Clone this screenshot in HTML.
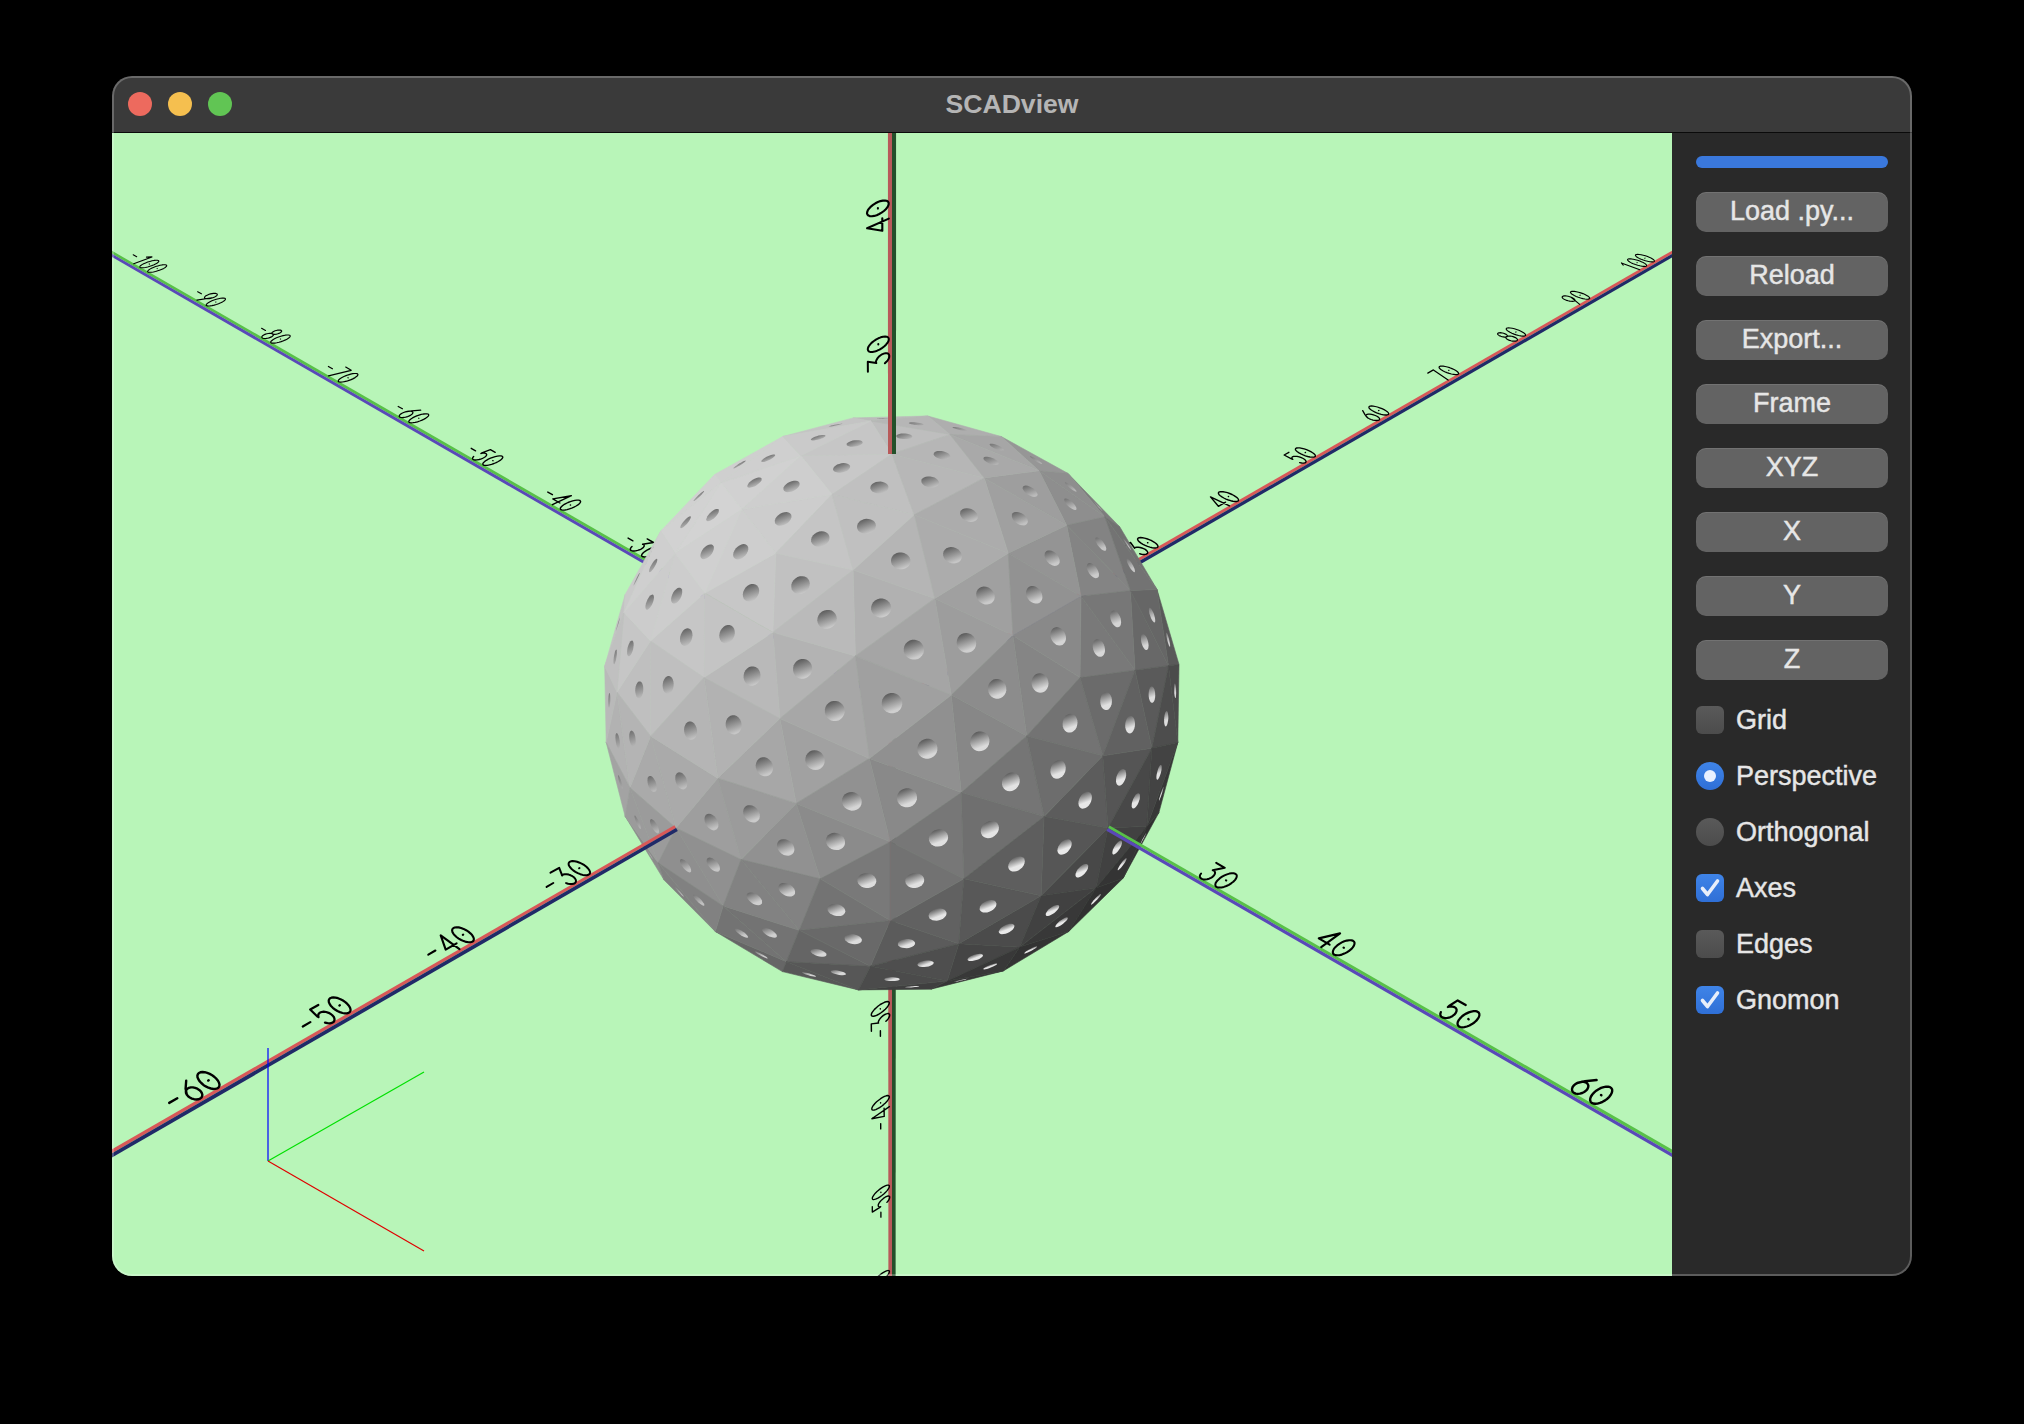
<!DOCTYPE html>
<html><head><meta charset="utf-8"><title>SCADview</title>
<style>
html,body{margin:0;padding:0;background:#000;width:2024px;height:1424px;overflow:hidden;}
body{font-family:"Liberation Sans",sans-serif;position:relative;}
#win{position:absolute;left:112px;top:76px;width:1800px;height:1200px;border-radius:20px;overflow:hidden;background:#292929;}
#title{position:absolute;left:0;top:0;width:1800px;height:56px;background:#3a3a3a;}
#title .sep{position:absolute;left:0;top:56px;width:1800px;height:1px;background:#0a0a0a;}
#title .name{position:absolute;left:0;width:1800px;top:12.5px;text-align:center;font-weight:bold;font-size:26.6px;line-height:30px;color:#b5b5b5;}
.tl{position:absolute;top:16px;width:24px;height:24px;border-radius:50%;}
#view{position:absolute;left:0;top:57px;width:1560px;height:1143px;background:#b8f5b8;overflow:hidden;}
#view svg{position:absolute;left:0;top:0;}
#side{position:absolute;left:1560px;top:57px;width:240px;height:1143px;background:#292929;}
#border{position:absolute;left:0;top:0;width:1800px;height:1200px;border-radius:20px;box-shadow:inset 0 0 0 2px rgba(255,255,255,0.24);pointer-events:none;}
.btn{position:absolute;left:24px;width:192px;height:40px;border-radius:10px;background:#636363;color:#e6e6e6;font-size:27px;line-height:39px;text-align:center;-webkit-text-stroke:0.45px #e6e6e6;box-shadow:inset 0 1px 0 rgba(255,255,255,0.10);}
.bar{position:absolute;left:24px;top:23px;width:192px;height:12px;border-radius:6px;background:#3a78dc;}
.chk{position:absolute;left:24px;width:28px;height:28px;border-radius:6px;background:linear-gradient(#5a5a5a,#4c4c4c);}
.chk.on{background:linear-gradient(#3f84e8,#2f6fd6);}
.chk.on svg{position:absolute;left:0;top:0;}
.rad{position:absolute;left:24px;width:28px;height:28px;border-radius:50%;background:linear-gradient(#5a5a5a,#4c4c4c);}
.rad.on{background:linear-gradient(#3f84e8,#2f6fd6);}
.rad.on::after{content:"";position:absolute;left:8px;top:8px;width:12px;height:12px;border-radius:50%;background:#e8f0ff;}
.lbl{position:absolute;left:64px;font-size:27px;line-height:30px;color:#e6e6e6;-webkit-text-stroke:0.45px #e6e6e6;}
</style></head>
<body>
<div id="win">
  <div id="title">
    <div class="tl" style="left:16px;background:#ed6a5e;"></div>
    <div class="tl" style="left:56px;background:#f5bf4f;"></div>
    <div class="tl" style="left:96px;background:#61c554;"></div>
    <div class="name">SCADview</div>
    <div class="sep"></div>
  </div>
  <div id="view">
    <svg width="1560" height="1143" viewBox="112 133 1560 1143">
<polygon points="893.5,701 89.8,238 88.5,240.3 892,703.5" fill="#58c048"/><polygon points="892,703.5 88.5,240.3 87.1,242.7 890.5,706.2" fill="#5a48b8"/><polygon points="890.5,700.8 1700,234.5 1701.4,237 892,703.5" fill="#d85858"/><polygon points="892,703.5 1701.4,237 1702.9,239.7 893.7,706.5" fill="#202a68"/><polygon points="888.1,703.5 888.4,1305.9 892,1305.9 892,703.5" fill="#b85a5a"/><polygon points="892,703.5 892,1305.9 895.6,1305.9 895.9,703.5" fill="#24502a"/>
<g fill="none" stroke="#000" stroke-linecap="round" stroke-linejoin="round"><path d="M880.4 1036.3 L880.4 1030.7 M871.4 1031.2 L871.3 1023.9 L878.6 1023 L878.2 1023.1 L878.3 1022 L878.7 1020.8 L879.5 1019.4 L880.6 1018 L882 1016.6 L883.4 1015.4 L884.9 1014.5 L886.4 1013.9 L887.6 1013.6 L888.6 1013.6 L889.3 1014.1 L889.7 1014.9 L889.6 1015.9 L889.1 1017.2 L888.3 1018.6 L887.2 1020 L885.9 1021.3 M880.3 1004.5 L878.2 1006 L876.3 1007.7 L874.5 1009.4 L873.1 1011.1 L872 1012.6 L871.4 1014 L871.3 1015.1 L871.7 1015.8 L872.5 1016.2 L873.8 1016.2 L875.4 1015.8 L877.3 1015 L879.3 1013.9 L881.4 1012.5 L883.4 1010.9 L885.3 1009.2 L886.9 1007.5 L888.1 1005.9 L888.9 1004.4 L889.3 1003.2 L889.2 1002.3 L888.6 1001.7 L887.5 1001.5 L886.1 1001.8 L884.4 1002.3 L882.4 1003.3 L880.3 1004.5 M880.3 1009.1 L880.3 1008.7" stroke-width="1.46"/><path d="M880.7 1128.9 L880.7 1123.6 M889.4 1106.6 L871.8 1118.7 L884.2 1116.4 L884.1 1108.2 M880.6 1098.7 L878.6 1100.2 L876.6 1101.8 L874.9 1103.5 L873.5 1105.2 L872.5 1106.7 L871.9 1108 L871.8 1109.1 L872.2 1109.8 L873 1110.1 L874.2 1110 L875.8 1109.6 L877.6 1108.7 L879.6 1107.6 L881.6 1106.2 L883.6 1104.6 L885.4 1102.9 L887 1101.3 L888.2 1099.7 L889 1098.2 L889.4 1097.1 L889.2 1096.2 L888.7 1095.7 L887.6 1095.5 L886.2 1095.8 L884.5 1096.4 L882.6 1097.4 L880.6 1098.7 M880.6 1103 L880.6 1102.6" stroke-width="1.39"/><path d="M880.9 1217.2 L880.9 1212.2 M872.3 1206.6 L872.3 1212.1 L879.5 1207.6 L880.7 1206.7 L879.4 1206.9 L878.5 1206.5 L878.2 1205.8 L878.3 1204.6 L879 1203.1 L880.2 1201.5 L881.7 1199.9 L883.4 1198.4 L885.1 1197.2 L886.8 1196.4 L888.1 1196 L889.2 1196.2 L889.7 1196.8 L889.7 1197.8 L889.2 1199.2 L888.3 1200.8 L886.9 1202.4 M880.9 1188.4 L878.9 1189.9 L877 1191.5 L875.3 1193.2 L874 1194.8 L873 1196.3 L872.4 1197.6 L872.3 1198.6 L872.6 1199.3 L873.4 1199.6 L874.6 1199.4 L876.2 1198.9 L877.9 1198.1 L879.9 1196.9 L881.9 1195.5 L883.8 1193.9 L885.6 1192.2 L887.1 1190.6 L888.3 1189 L889.1 1187.6 L889.4 1186.5 L889.3 1185.6 L888.7 1185.2 L887.7 1185.1 L886.4 1185.4 L884.7 1186.1 L882.8 1187.1 L880.9 1188.4 M880.9 1192.5 L880.9 1192.1" stroke-width="1.33"/><path d="M881.2 1301.5 L881.2 1296.6 M873.1 1291.8 L878.2 1291.8 L882.3 1290.8 L881 1291.4 L879.9 1291.5 L879.1 1291.3 L878.7 1290.7 L878.7 1289.8 L879.1 1288.6 L879.9 1287.3 L881 1285.8 L882.4 1284.4 L883.8 1283.2 L885.3 1282.1 L886.7 1281.4 L888 1281 L888.9 1281.1 L889.5 1281.5 L889.7 1282.2 L889.5 1283.3 L888.9 1284.6 L887.9 1286 L886.7 1287.4 L885.3 1288.8 L883.8 1289.9 L882.3 1290.8 M881.1 1273.9 L879.2 1275.4 L877.3 1277.1 L875.7 1278.8 L874.4 1280.4 L873.4 1281.8 L872.8 1283.1 L872.7 1284 L873.1 1284.7 L873.9 1284.9 L875 1284.7 L876.5 1284.2 L878.3 1283.3 L880.2 1282.1 L882.1 1280.7 L884 1279.1 L885.7 1277.4 L887.2 1275.8 L888.4 1274.2 L889.1 1272.9 L889.5 1271.8 L889.4 1271 L888.8 1270.6 L887.8 1270.5 L886.5 1270.9 L884.9 1271.6 L883.1 1272.6 L881.1 1273.9 M881.1 1277.8 L881.1 1277.5" stroke-width="1.27"/><path d="M881.4 1381.9 L881.4 1377.3 M873.2 1378.9 L873.2 1372.5 L889.6 1364.8 M881.4 1355.6 L879.5 1357.1 L877.7 1358.8 L876.1 1360.4 L874.8 1362 L873.8 1363.5 L873.3 1364.7 L873.2 1365.6 L873.5 1366.2 L874.3 1366.4 L875.4 1366.2 L876.9 1365.6 L878.6 1364.7 L880.4 1363.5 L882.3 1362 L884.2 1360.5 L885.9 1358.8 L887.3 1357.2 L888.5 1355.6 L889.2 1354.3 L889.5 1353.2 L889.4 1352.5 L888.9 1352.1 L887.9 1352.1 L886.6 1352.5 L885 1353.2 L883.3 1354.3 L881.4 1355.6 M881.4 1359.3 L881.4 1359.1" stroke-width="1.21"/><path d="M1124.1 546.1 L1130.5 542.5 L1134.7 548.2 L1134.4 547.9 L1135.4 547.5 L1136.7 547.2 L1138.3 547.2 L1140.1 547.5 L1141.9 548 L1143.6 548.6 L1145.2 549.4 L1146.4 550.4 L1147.3 551.3 L1147.7 552.2 L1147.7 553 L1147.2 553.7 L1146.2 554.2 L1144.9 554.4 L1143.3 554.4 L1141.5 554.2 L1139.7 553.7 M1151.5 540.6 L1149.2 539.6 L1146.8 538.7 L1144.5 538.1 L1142.4 537.7 L1140.5 537.6 L1139.1 537.7 L1138.1 538.1 L1137.6 538.8 L1137.7 539.7 L1138.3 540.8 L1139.4 541.9 L1141 543.1 L1143 544.3 L1145.2 545.4 L1147.5 546.4 L1149.9 547.1 L1152.2 547.7 L1154.2 547.9 L1155.8 547.9 L1157.1 547.6 L1157.8 547 L1158 546.2 L1157.6 545.3 L1156.7 544.1 L1155.4 543 L1153.6 541.8 L1151.5 540.6 M1147.6 542.8 L1147.9 542.7" stroke-width="1.46"/><path d="M1229.5 505.9 L1210.5 496.9 L1218.4 506.3 L1225.6 502.2 M1232 494.5 L1229.7 493.5 L1227.4 492.7 L1225.1 492.1 L1223 491.7 L1221.2 491.6 L1219.8 491.8 L1218.8 492.2 L1218.4 492.8 L1218.5 493.7 L1219.1 494.7 L1220.3 495.8 L1221.9 496.9 L1223.8 498 L1226 499.1 L1228.4 500 L1230.7 500.7 L1232.9 501.2 L1234.9 501.5 L1236.6 501.5 L1237.7 501.2 L1238.4 500.6 L1238.6 499.9 L1238.2 498.9 L1237.3 497.9 L1235.9 496.8 L1234.1 495.6 L1232 494.5 M1228.3 496.6 L1228.6 496.5" stroke-width="1.39"/><path d="M1288.9 452.3 L1284.1 455 L1291.5 458.9 L1292.8 459.4 L1292 458.4 L1291.9 457.5 L1292.4 456.8 L1293.5 456.4 L1295.1 456.3 L1297.1 456.4 L1299.2 456.9 L1301.3 457.6 L1303.2 458.5 L1304.7 459.5 L1305.7 460.6 L1306.1 461.5 L1305.8 462.3 L1304.9 462.8 L1303.5 463.1 L1301.7 463 L1299.6 462.7 M1308.7 450.6 L1306.5 449.6 L1304.2 448.9 L1301.9 448.3 L1299.8 447.9 L1298.1 447.8 L1296.7 448 L1295.8 448.3 L1295.4 449 L1295.5 449.8 L1296.2 450.7 L1297.4 451.8 L1299 452.9 L1300.9 453.9 L1303.1 454.9 L1305.4 455.8 L1307.7 456.5 L1309.9 457 L1311.9 457.2 L1313.5 457.2 L1314.6 456.9 L1315.3 456.4 L1315.4 455.7 L1315 454.8 L1314 453.8 L1312.6 452.7 L1310.8 451.6 L1308.7 450.6 M1305.2 452.6 L1305.5 452.4" stroke-width="1.33"/><path d="M1362.7 410.6 L1365.1 414.9 L1367.9 418 L1366.8 417.1 L1366.1 416.3 L1365.9 415.5 L1366.3 414.8 L1367.1 414.4 L1368.3 414.2 L1369.9 414.2 L1371.7 414.4 L1373.5 414.9 L1375.3 415.5 L1377 416.3 L1378.3 417.1 L1379.2 418 L1379.6 418.8 L1379.6 419.5 L1379 420.1 L1378 420.4 L1376.6 420.5 L1374.9 420.4 L1373 420.1 L1371.2 419.5 L1369.4 418.8 L1367.9 418 M1382 408.7 L1379.7 407.8 L1377.4 407 L1375.2 406.5 L1373.2 406.1 L1371.4 406 L1370.1 406.1 L1369.2 406.5 L1368.9 407.1 L1369 407.9 L1369.7 408.8 L1370.9 409.8 L1372.5 410.8 L1374.5 411.9 L1376.6 412.8 L1378.9 413.6 L1381.2 414.3 L1383.4 414.8 L1385.3 415 L1386.9 415 L1388 414.7 L1388.6 414.2 L1388.7 413.5 L1388.2 412.7 L1387.3 411.7 L1385.9 410.7 L1384.1 409.6 L1382 408.7 M1378.6 410.6 L1378.9 410.4" stroke-width="1.26"/><path d="M1427.8 373.1 L1433.4 369.9 L1448.1 380.1 M1452 368.6 L1449.7 367.7 L1447.4 367 L1445.2 366.5 L1443.2 366.2 L1441.5 366.1 L1440.2 366.2 L1439.4 366.6 L1439.1 367.1 L1439.2 367.9 L1440 368.7 L1441.2 369.7 L1442.8 370.7 L1444.7 371.7 L1446.9 372.6 L1449.2 373.4 L1451.4 374 L1453.6 374.4 L1455.4 374.7 L1457 374.6 L1458 374.4 L1458.6 373.9 L1458.7 373.3 L1458.2 372.5 L1457.2 371.5 L1455.8 370.5 L1454 369.5 L1452 368.6 M1448.7 370.4 L1449 370.3" stroke-width="1.21"/><path d="M1504.7 333.7 L1503.6 333.3 L1502.4 333 L1501.3 332.8 L1500.2 332.7 L1499.3 332.8 L1498.5 332.9 L1498 333.2 L1497.7 333.5 L1497.6 334 L1497.8 334.4 L1498.3 334.9 L1499 335.4 L1499.9 335.9 L1500.9 336.3 L1502 336.7 L1503.2 336.9 L1504.3 337.1 L1505.3 337.1 L1506.2 337 L1506.9 336.8 L1507.3 336.5 L1507.5 336.1 L1507.4 335.6 L1507 335.1 L1506.4 334.6 L1505.6 334.1 L1504.7 333.7 M1514.3 337.1 L1513 336.6 L1511.7 336.3 L1510.3 336.1 L1509.1 336 L1507.9 336.1 L1507 336.3 L1506.3 336.6 L1505.9 337 L1505.8 337.5 L1506 338.1 L1506.5 338.7 L1507.3 339.3 L1508.4 339.9 L1509.6 340.4 L1510.9 340.8 L1512.3 341.1 L1513.6 341.2 L1514.8 341.2 L1515.9 341.1 L1516.7 340.8 L1517.2 340.4 L1517.5 340 L1517.4 339.4 L1517 338.8 L1516.4 338.2 L1515.4 337.6 L1514.3 337.1 M1518.9 330.3 L1516.6 329.5 L1514.4 328.8 L1512.2 328.3 L1510.2 328 L1508.6 327.9 L1507.3 328 L1506.5 328.3 L1506.2 328.9 L1506.4 329.6 L1507.1 330.4 L1508.3 331.3 L1510 332.3 L1511.9 333.2 L1514.1 334.1 L1516.3 334.9 L1518.6 335.5 L1520.7 335.9 L1522.5 336.1 L1524 336.1 L1525 335.8 L1525.6 335.4 L1525.6 334.8 L1525.1 334 L1524.1 333.1 L1522.7 332.2 L1520.9 331.2 L1518.9 330.3 M1515.8 332.1 L1516 331.9" stroke-width="1.16"/><path d="M1571.1 297.2 L1569.7 296.7 L1568.2 296.3 L1566.7 296 L1565.4 295.9 L1564.2 295.9 L1563.2 296.1 L1562.5 296.4 L1562.2 296.8 L1562.2 297.4 L1562.5 298 L1563.2 298.6 L1564.1 299.2 L1565.3 299.8 L1566.7 300.4 L1568.2 300.8 L1569.7 301.1 L1571.1 301.3 L1572.4 301.4 L1573.5 301.3 L1574.3 301 L1574.8 300.7 L1575 300.2 L1574.8 299.6 L1574.3 299 L1573.5 298.4 L1572.4 297.7 L1571.1 297.2 M1571.1 297.2 L1579.7 304.4 M1582.9 293.6 L1580.7 292.9 L1578.5 292.2 L1576.3 291.7 L1574.4 291.4 L1572.7 291.3 L1571.5 291.4 L1570.7 291.8 L1570.4 292.3 L1570.7 292.9 L1571.4 293.7 L1572.6 294.6 L1574.3 295.5 L1576.2 296.4 L1578.3 297.3 L1580.6 298 L1582.8 298.6 L1584.9 299 L1586.7 299.2 L1588.1 299.2 L1589.1 298.9 L1589.7 298.5 L1589.7 297.9 L1589.2 297.2 L1588.2 296.3 L1586.7 295.4 L1585 294.5 L1582.9 293.6 M1580 295.3 L1580.2 295.2" stroke-width="1.11"/><path d="M1623.2 265.3 L1621.4 262.9 L1639.8 269.8 M1639.8 261.1 L1637.6 260.3 L1635.4 259.7 L1633.3 259.2 L1631.4 258.9 L1629.8 258.8 L1628.6 258.9 L1627.8 259.3 L1627.5 259.8 L1627.8 260.4 L1628.6 261.2 L1629.8 262 L1631.4 262.9 L1633.3 263.8 L1635.5 264.6 L1637.7 265.3 L1639.9 265.8 L1641.9 266.2 L1643.7 266.4 L1645.1 266.4 L1646.1 266.2 L1646.6 265.8 L1646.6 265.2 L1646.1 264.5 L1645.1 263.6 L1643.6 262.8 L1641.8 261.9 L1639.8 261.1 M1637 262.7 L1637.2 262.5 M1647.6 256.6 L1645.4 255.8 L1643.2 255.2 L1641.1 254.7 L1639.2 254.5 L1637.6 254.4 L1636.4 254.5 L1635.6 254.8 L1635.4 255.3 L1635.7 255.9 L1636.4 256.7 L1637.6 257.5 L1639.2 258.4 L1641.2 259.3 L1643.3 260.1 L1645.5 260.8 L1647.7 261.3 L1649.7 261.7 L1651.5 261.9 L1652.9 261.9 L1653.9 261.7 L1654.4 261.3 L1654.4 260.7 L1653.9 260 L1652.9 259.2 L1651.4 258.3 L1649.7 257.4 L1647.6 256.6 M1644.8 258.2 L1645 258.1" stroke-width="1.06"/><path d="M628.1 538.1 L632.9 540.8 M647.2 538.9 L653.5 542.5 L642.6 544.3 L643 544.2 L643.8 544.7 L644.2 545.5 L644.1 546.3 L643.5 547.2 L642.5 548.2 L641.1 549.1 L639.5 549.8 L637.7 550.4 L635.9 550.8 L634.2 551 L632.6 550.9 L631.4 550.6 L630.6 550.1 L630.3 549.3 L630.4 548.5 L631 547.6 L632 546.6 M655.6 553.8 L657.7 552.7 L659.5 551.5 L660.9 550.3 L661.7 549.1 L662.1 548.2 L661.9 547.4 L661.1 546.8 L659.9 546.5 L658.2 546.5 L656.2 546.7 L654 547.3 L651.6 548 L649.3 549 L647 550.1 L645.1 551.3 L643.5 552.5 L642.4 553.7 L641.7 554.8 L641.6 555.7 L642.1 556.3 L643.1 556.8 L644.6 556.9 L646.5 556.8 L648.6 556.4 L650.9 555.8 L653.3 554.9 L655.6 553.8 M651.7 551.6 L652 551.8" stroke-width="1.46"/><path d="M547.8 492.1 L552.4 494.7 M552.4 504.7 L571.4 495.7 L552.8 498.9 L559.9 503 M574 507.1 L576.1 506 L577.9 504.9 L579.3 503.7 L580.2 502.6 L580.6 501.7 L580.4 501 L579.7 500.4 L578.5 500.1 L576.9 500.1 L574.9 500.4 L572.7 500.9 L570.3 501.6 L568 502.5 L565.8 503.6 L563.8 504.7 L562.2 505.9 L561.1 507 L560.4 508 L560.3 508.8 L560.7 509.5 L561.7 509.9 L563.1 510.1 L564.9 510 L567.1 509.6 L569.4 508.9 L571.7 508.1 L574 507.1 M570.3 505 L570.6 505.1" stroke-width="1.39"/><path d="M471.2 448.3 L475.6 450.8 M495.2 452.3 L490.4 449.6 L481.9 452.9 L480.8 453.5 L482.8 453.2 L484.6 453.2 L485.9 453.6 L486.6 454.2 L486.7 455 L486.1 456 L485 457 L483.3 458 L481.4 458.9 L479.2 459.5 L477.1 459.9 L475.2 460 L473.7 459.8 L472.8 459.2 L472.5 458.5 L472.8 457.5 L473.7 456.5 M496.2 462.6 L498.3 461.5 L500.1 460.4 L501.5 459.3 L502.4 458.3 L502.8 457.4 L502.7 456.7 L502.1 456.2 L500.9 455.9 L499.3 455.9 L497.4 456.2 L495.2 456.6 L492.9 457.3 L490.5 458.2 L488.3 459.2 L486.4 460.3 L484.8 461.4 L483.6 462.5 L482.9 463.4 L482.8 464.2 L483.2 464.9 L484.1 465.3 L485.5 465.4 L487.3 465.3 L489.4 464.9 L491.6 464.3 L494 463.5 L496.2 462.6 M492.7 460.6 L493 460.7" stroke-width="1.33"/><path d="M398.2 406.5 L402.4 408.8 M420.7 410.2 L411.8 410.9 L405.4 411.9 L407.3 411.4 L409.1 411.2 L410.6 411.2 L411.8 411.5 L412.6 411.9 L412.9 412.6 L412.7 413.3 L412 414.2 L410.8 415.1 L409.3 415.9 L407.6 416.6 L405.7 417.1 L403.9 417.5 L402.2 417.6 L400.8 417.4 L399.8 417.1 L399.2 416.5 L399.2 415.8 L399.7 415 L400.6 414.1 L402 413.3 L403.6 412.5 L405.4 411.9 M422.1 420.1 L424.1 419.1 L425.9 418.1 L427.3 417 L428.3 416.1 L428.7 415.2 L428.6 414.5 L428 414 L426.9 413.8 L425.3 413.8 L423.4 414 L421.2 414.4 L419 415.1 L416.7 415.9 L414.5 416.9 L412.5 417.9 L410.9 419 L409.7 420 L409 420.9 L408.8 421.7 L409.2 422.3 L410.1 422.7 L411.4 422.8 L413.2 422.7 L415.2 422.4 L417.5 421.8 L419.8 421 L422.1 420.1 M418.7 418.2 L418.9 418.3" stroke-width="1.26"/><path d="M328.4 366.5 L332.4 368.8 M345.7 367.1 L351.2 370.3 L328.5 375.9 M351.2 379.6 L353.3 378.6 L355.1 377.6 L356.5 376.6 L357.4 375.7 L357.9 374.9 L357.8 374.2 L357.2 373.7 L356.1 373.5 L354.6 373.5 L352.7 373.7 L350.6 374.1 L348.4 374.8 L346.1 375.6 L343.9 376.5 L342 377.5 L340.3 378.5 L339.1 379.4 L338.4 380.3 L338.2 381.1 L338.5 381.6 L339.4 382 L340.7 382.1 L342.4 382 L344.4 381.7 L346.7 381.2 L349 380.4 L351.2 379.6 M348 377.7 L348.2 377.9" stroke-width="1.21"/><path d="M261.6 328.3 L265.5 330.5 M278.9 333.4 L279.8 333 L280.6 332.5 L281.2 332 L281.6 331.5 L281.7 331 L281.5 330.7 L281.1 330.4 L280.4 330.1 L279.5 330.1 L278.5 330.1 L277.4 330.2 L276.3 330.5 L275.1 330.8 L274.1 331.2 L273.2 331.7 L272.5 332.2 L272 332.7 L271.8 333.2 L271.9 333.6 L272.2 333.9 L272.7 334.2 L273.5 334.4 L274.4 334.4 L275.5 334.3 L276.6 334.1 L277.8 333.8 L278.9 333.4 M270.3 337.4 L271.4 336.9 L272.4 336.3 L273 335.7 L273.4 335.1 L273.5 334.6 L273.2 334.1 L272.7 333.7 L271.9 333.4 L270.8 333.3 L269.6 333.3 L268.3 333.5 L266.9 333.8 L265.6 334.1 L264.4 334.6 L263.4 335.2 L262.5 335.8 L262 336.4 L261.8 337 L261.9 337.5 L262.3 337.9 L263 338.3 L263.9 338.5 L265 338.5 L266.3 338.4 L267.7 338.2 L269 337.9 L270.3 337.4 M283.5 340.8 L285.5 339.9 L287.3 338.9 L288.7 338 L289.7 337.1 L290.2 336.3 L290.1 335.7 L289.6 335.2 L288.5 335 L287 335 L285.2 335.2 L283.1 335.6 L280.9 336.2 L278.6 337 L276.5 337.8 L274.5 338.8 L272.9 339.7 L271.7 340.7 L270.9 341.5 L270.7 342.2 L271 342.8 L271.8 343.1 L273.1 343.2 L274.8 343.1 L276.8 342.8 L279 342.3 L281.2 341.6 L283.5 340.8 M280.4 339 L280.6 339.1" stroke-width="1.16"/><path d="M197.7 291.7 L201.4 293.8 M213.5 297.5 L214.7 296.9 L215.8 296.3 L216.6 295.7 L217.2 295.1 L217.3 294.5 L217.1 294 L216.6 293.7 L215.8 293.4 L214.7 293.3 L213.4 293.4 L212 293.6 L210.5 293.9 L209.1 294.3 L207.7 294.9 L206.5 295.5 L205.5 296.1 L204.9 296.7 L204.5 297.3 L204.5 297.8 L204.9 298.3 L205.5 298.6 L206.5 298.7 L207.7 298.8 L209.1 298.7 L210.5 298.4 L212 298 L213.5 297.5 M213.5 297.5 L196.9 300.1 M218.6 303.7 L220.7 302.8 L222.5 301.9 L223.9 301 L224.9 300.1 L225.4 299.4 L225.4 298.8 L224.8 298.3 L223.8 298.1 L222.4 298.1 L220.5 298.3 L218.5 298.7 L216.3 299.3 L214 300 L211.9 300.8 L210 301.8 L208.3 302.7 L207.1 303.6 L206.4 304.4 L206.1 305.1 L206.4 305.6 L207.2 305.9 L208.4 306 L210.1 305.9 L212 305.6 L214.2 305.1 L216.4 304.5 L218.6 303.7 M215.7 302 L215.9 302.1" stroke-width="1.11"/><path d="M133.2 254.7 L136.7 256.7 M146.4 257.1 L152 256.9 L133.7 263.7 M152.1 265.6 L154.1 264.7 L155.9 263.8 L157.3 263 L158.3 262.2 L158.8 261.4 L158.8 260.9 L158.3 260.5 L157.3 260.2 L155.9 260.2 L154.1 260.4 L152.1 260.8 L149.9 261.4 L147.7 262.1 L145.6 262.9 L143.6 263.7 L142 264.6 L140.8 265.5 L140 266.2 L139.8 266.9 L140 267.4 L140.8 267.7 L142 267.8 L143.6 267.7 L145.5 267.4 L147.7 267 L149.9 266.3 L152.1 265.6 M149.2 263.9 L149.4 264.1 M160 270.1 L162 269.2 L163.8 268.4 L165.2 267.5 L166.2 266.7 L166.7 265.9 L166.7 265.4 L166.2 265 L165.2 264.7 L163.8 264.7 L162 264.9 L160 265.3 L157.8 265.9 L155.6 266.6 L153.4 267.4 L151.5 268.2 L149.9 269.1 L148.7 270 L147.9 270.8 L147.6 271.4 L147.9 271.9 L148.6 272.2 L149.9 272.3 L151.5 272.3 L153.4 272 L155.5 271.5 L157.8 270.8 L160 270.1 M157.1 268.5 L157.3 268.6" stroke-width="1.06"/></g>
<defs><linearGradient id="h0" gradientUnits="userSpaceOnUse" x1="1165.7" y1="633" x2="1170.7" y2="646.5"><stop offset="0" stop-color="#7c7c7c"/><stop offset="0.65" stop-color="#d1d1d1"/></linearGradient><linearGradient id="h1" gradientUnits="userSpaceOnUse" x1="1095.3" y1="499.7" x2="1099.8" y2="511.6"><stop offset="0" stop-color="#7c7c7c"/><stop offset="0.77" stop-color="#bdbdbd"/></linearGradient><linearGradient id="h2" gradientUnits="userSpaceOnUse" x1="1034.1" y1="454.7" x2="1038.1" y2="465.6"><stop offset="0" stop-color="#7c7c7c"/><stop offset="0.85" stop-color="#afafaf"/></linearGradient><linearGradient id="h3" gradientUnits="userSpaceOnUse" x1="1067.8" y1="497.4" x2="1072.9" y2="511"><stop offset="0" stop-color="#727272"/><stop offset="0.83" stop-color="#bebebe"/></linearGradient><linearGradient id="h4" gradientUnits="userSpaceOnUse" x1="1068.5" y1="481" x2="1072.9" y2="492.9"><stop offset="0" stop-color="#7b7b7b"/><stop offset="0.82" stop-color="#b5b5b5"/></linearGradient><linearGradient id="h5" gradientUnits="userSpaceOnUse" x1="1141.9" y1="634.5" x2="1147.6" y2="649.8"><stop offset="0" stop-color="#707070"/><stop offset="0.70" stop-color="#d6d6d6"/></linearGradient><linearGradient id="h6" gradientUnits="userSpaceOnUse" x1="1089.9" y1="562.7" x2="1095.8" y2="578.6"><stop offset="0" stop-color="#6a6a6a"/><stop offset="0.79" stop-color="#cccccc"/></linearGradient><linearGradient id="h7" gradientUnits="userSpaceOnUse" x1="1095.7" y1="639.5" x2="1102" y2="656.5"><stop offset="0" stop-color="#666666"/><stop offset="0.76" stop-color="#d7d7d7"/></linearGradient><linearGradient id="h8" gradientUnits="userSpaceOnUse" x1="1112.6" y1="610.8" x2="1118.7" y2="627.1"><stop offset="0" stop-color="#696969"/><stop offset="0.75" stop-color="#d4d4d4"/></linearGradient><linearGradient id="h9" gradientUnits="userSpaceOnUse" x1="1124.9" y1="538" x2="1129.7" y2="550.8"><stop offset="0" stop-color="#7c7c7c"/><stop offset="0.73" stop-color="#c3c3c3"/></linearGradient><linearGradient id="h10" gradientUnits="userSpaceOnUse" x1="1098.1" y1="536.8" x2="1103.5" y2="551.4"><stop offset="0" stop-color="#707070"/><stop offset="0.79" stop-color="#c6c6c6"/></linearGradient><linearGradient id="h11" gradientUnits="userSpaceOnUse" x1="1149.4" y1="608" x2="1154.8" y2="622.4"><stop offset="0" stop-color="#767676"/><stop offset="0.69" stop-color="#cfcfcf"/></linearGradient><linearGradient id="h12" gradientUnits="userSpaceOnUse" x1="1128.2" y1="558.5" x2="1133.5" y2="572.6"><stop offset="0" stop-color="#777777"/><stop offset="0.74" stop-color="#c7c7c7"/></linearGradient><linearGradient id="h13" gradientUnits="userSpaceOnUse" x1="958.2" y1="425.1" x2="961" y2="432.7"><stop offset="0" stop-color="#7c7c7c"/><stop offset="0.93" stop-color="#a7a7a7"/></linearGradient><linearGradient id="h14" gradientUnits="userSpaceOnUse" x1="883.2" y1="416.3" x2="884.7" y2="420.4"><stop offset="0" stop-color="#7c7c7c"/><stop offset="0.97" stop-color="#a7a7a7"/></linearGradient><linearGradient id="h15" gradientUnits="userSpaceOnUse" x1="902.9" y1="432.6" x2="905.6" y2="440"><stop offset="0" stop-color="#727272"/><stop offset="0.98" stop-color="#b2b2b2"/></linearGradient><linearGradient id="h16" gradientUnits="userSpaceOnUse" x1="915" y1="420.5" x2="917.4" y2="427"><stop offset="0" stop-color="#7b7b7b"/><stop offset="0.96" stop-color="#a8a8a8"/></linearGradient><linearGradient id="h17" gradientUnits="userSpaceOnUse" x1="739" y1="462.9" x2="740.2" y2="466.1"><stop offset="0" stop-color="#7c7c7c"/><stop offset="1.00" stop-color="#a7a7a7"/></linearGradient><linearGradient id="h18" gradientUnits="userSpaceOnUse" x1="840" y1="463.6" x2="843.2" y2="472.3"><stop offset="0" stop-color="#6a6a6a"/><stop offset="1.00" stop-color="#bababa"/></linearGradient><linearGradient id="h19" gradientUnits="userSpaceOnUse" x1="753.3" y1="479.2" x2="755.8" y2="485.9"><stop offset="0" stop-color="#707070"/><stop offset="1.00" stop-color="#b4b4b4"/></linearGradient><linearGradient id="h20" gradientUnits="userSpaceOnUse" x1="781" y1="513.3" x2="785.2" y2="524.5"><stop offset="0" stop-color="#666666"/><stop offset="1.00" stop-color="#bfbfbf"/></linearGradient><linearGradient id="h21" gradientUnits="userSpaceOnUse" x1="789.8" y1="481.9" x2="793.2" y2="491"><stop offset="0" stop-color="#696969"/><stop offset="1.00" stop-color="#bbbbbb"/></linearGradient><linearGradient id="h22" gradientUnits="userSpaceOnUse" x1="835.2" y1="424" x2="836" y2="426.3"><stop offset="0" stop-color="#7c7c7c"/><stop offset="1.00" stop-color="#a7a7a7"/></linearGradient><linearGradient id="h23" gradientUnits="userSpaceOnUse" x1="767.5" y1="456.2" x2="769" y2="460.3"><stop offset="0" stop-color="#767676"/><stop offset="1.00" stop-color="#adadad"/></linearGradient><linearGradient id="h24" gradientUnits="userSpaceOnUse" x1="853.4" y1="440.2" x2="855.8" y2="446.7"><stop offset="0" stop-color="#717171"/><stop offset="1.00" stop-color="#b3b3b3"/></linearGradient><linearGradient id="h25" gradientUnits="userSpaceOnUse" x1="817.5" y1="435.8" x2="818.9" y2="439.5"><stop offset="0" stop-color="#777777"/><stop offset="1.00" stop-color="#acacac"/></linearGradient><linearGradient id="h26" gradientUnits="userSpaceOnUse" x1="832.3" y1="833" x2="838.6" y2="849.9"><stop offset="0" stop-color="#5e5e5e"/><stop offset="0.81" stop-color="#d6d6d6"/></linearGradient><linearGradient id="h27" gradientUnits="userSpaceOnUse" x1="903.6" y1="788.8" x2="910.3" y2="806.7"><stop offset="0" stop-color="#5b5b5b"/><stop offset="0.81" stop-color="#dadada"/></linearGradient><linearGradient id="h28" gradientUnits="userSpaceOnUse" x1="811.5" y1="750.8" x2="818.5" y2="769.5"><stop offset="0" stop-color="#5b5b5b"/><stop offset="0.89" stop-color="#cdcdcd"/></linearGradient><linearGradient id="h29" gradientUnits="userSpaceOnUse" x1="848.5" y1="792.4" x2="855.2" y2="810.3"><stop offset="0" stop-color="#5c5c5c"/><stop offset="0.83" stop-color="#d5d5d5"/></linearGradient><linearGradient id="h30" gradientUnits="userSpaceOnUse" x1="976.5" y1="732.2" x2="983.3" y2="750.5"><stop offset="0" stop-color="#5b5b5b"/><stop offset="0.80" stop-color="#dbdbdb"/></linearGradient><linearGradient id="h31" gradientUnits="userSpaceOnUse" x1="1036.6" y1="674" x2="1043.4" y2="692.1"><stop offset="0" stop-color="#5e5e5e"/><stop offset="0.80" stop-color="#d9d9d9"/></linearGradient><linearGradient id="h32" gradientUnits="userSpaceOnUse" x1="963" y1="633.6" x2="969.9" y2="652.2"><stop offset="0" stop-color="#5b5b5b"/><stop offset="0.87" stop-color="#cfcfcf"/></linearGradient><linearGradient id="h33" gradientUnits="userSpaceOnUse" x1="993.6" y1="679.5" x2="1000.6" y2="698.2"><stop offset="0" stop-color="#5c5c5c"/><stop offset="0.82" stop-color="#d7d7d7"/></linearGradient><linearGradient id="h34" gradientUnits="userSpaceOnUse" x1="799.2" y1="659.7" x2="806" y2="678"><stop offset="0" stop-color="#5b5b5b"/><stop offset="0.95" stop-color="#cbcbcb"/></linearGradient><linearGradient id="h35" gradientUnits="userSpaceOnUse" x1="877.8" y1="599.1" x2="884.5" y2="617"><stop offset="0" stop-color="#5b5b5b"/><stop offset="0.94" stop-color="#cbcbcb"/></linearGradient><linearGradient id="h36" gradientUnits="userSpaceOnUse" x1="797.6" y1="577.1" x2="803.5" y2="593.1"><stop offset="0" stop-color="#5e5e5e"/><stop offset="0.99" stop-color="#c8c8c8"/></linearGradient><linearGradient id="h37" gradientUnits="userSpaceOnUse" x1="823.8" y1="610.6" x2="830.3" y2="628"><stop offset="0" stop-color="#5c5c5c"/><stop offset="0.97" stop-color="#cacaca"/></linearGradient><linearGradient id="h38" gradientUnits="userSpaceOnUse" x1="923.9" y1="739.4" x2="930.9" y2="758.2"><stop offset="0" stop-color="#5a5a5a"/><stop offset="0.83" stop-color="#d7d7d7"/></linearGradient><linearGradient id="h39" gradientUnits="userSpaceOnUse" x1="910.4" y1="640.3" x2="917.4" y2="659.1"><stop offset="0" stop-color="#5a5a5a"/><stop offset="0.90" stop-color="#cccccc"/></linearGradient><linearGradient id="h40" gradientUnits="userSpaceOnUse" x1="831.2" y1="701.4" x2="838.3" y2="720.5"><stop offset="0" stop-color="#5a5a5a"/><stop offset="0.91" stop-color="#cccccc"/></linearGradient><linearGradient id="h41" gradientUnits="userSpaceOnUse" x1="888.4" y1="693.5" x2="895.6" y2="712.7"><stop offset="0" stop-color="#5a5a5a"/><stop offset="0.88" stop-color="#cfcfcf"/></linearGradient><linearGradient id="h42" gradientUnits="userSpaceOnUse" x1="782.5" y1="839" x2="788.8" y2="855.8"><stop offset="0" stop-color="#616161"/><stop offset="0.83" stop-color="#d0d0d0"/></linearGradient><linearGradient id="h43" gradientUnits="userSpaceOnUse" x1="761" y1="757.6" x2="767.8" y2="775.9"><stop offset="0" stop-color="#5e5e5e"/><stop offset="0.91" stop-color="#c8c8c8"/></linearGradient><linearGradient id="h44" gradientUnits="userSpaceOnUse" x1="708.3" y1="813.7" x2="714.5" y2="830.5"><stop offset="0" stop-color="#656565"/><stop offset="0.88" stop-color="#c3c3c3"/></linearGradient><linearGradient id="h45" gradientUnits="userSpaceOnUse" x1="748.3" y1="805.2" x2="754.7" y2="822.5"><stop offset="0" stop-color="#616161"/><stop offset="0.87" stop-color="#cacaca"/></linearGradient><linearGradient id="h46" gradientUnits="userSpaceOnUse" x1="748.8" y1="667.2" x2="755.3" y2="684.9"><stop offset="0" stop-color="#5e5e5e"/><stop offset="0.97" stop-color="#c8c8c8"/></linearGradient><linearGradient id="h47" gradientUnits="userSpaceOnUse" x1="748.2" y1="585.2" x2="753.8" y2="600.3"><stop offset="0" stop-color="#616161"/><stop offset="1.00" stop-color="#c4c4c4"/></linearGradient><linearGradient id="h48" gradientUnits="userSpaceOnUse" x1="683.4" y1="629.6" x2="689" y2="644.7"><stop offset="0" stop-color="#656565"/><stop offset="1.00" stop-color="#bfbfbf"/></linearGradient><linearGradient id="h49" gradientUnits="userSpaceOnUse" x1="724" y1="626.2" x2="730" y2="642.2"><stop offset="0" stop-color="#616161"/><stop offset="1.00" stop-color="#c4c4c4"/></linearGradient><linearGradient id="h50" gradientUnits="userSpaceOnUse" x1="649.2" y1="776.2" x2="655" y2="791.9"><stop offset="0" stop-color="#6c6c6c"/><stop offset="0.91" stop-color="#b8b8b8"/></linearGradient><linearGradient id="h51" gradientUnits="userSpaceOnUse" x1="636.5" y1="682.4" x2="642" y2="697.1"><stop offset="0" stop-color="#6c6c6c"/><stop offset="0.98" stop-color="#b8b8b8"/></linearGradient><linearGradient id="h52" gradientUnits="userSpaceOnUse" x1="615" y1="733.7" x2="620.3" y2="747.8"><stop offset="0" stop-color="#767676"/><stop offset="0.94" stop-color="#adadad"/></linearGradient><linearGradient id="h53" gradientUnits="userSpaceOnUse" x1="629.7" y1="731.3" x2="635.2" y2="746.1"><stop offset="0" stop-color="#717171"/><stop offset="0.95" stop-color="#b3b3b3"/></linearGradient><linearGradient id="h54" gradientUnits="userSpaceOnUse" x1="730.3" y1="715.8" x2="737" y2="733.7"><stop offset="0" stop-color="#5f5f5f"/><stop offset="0.94" stop-color="#c6c6c6"/></linearGradient><linearGradient id="h55" gradientUnits="userSpaceOnUse" x1="665.2" y1="677.1" x2="671.1" y2="692.8"><stop offset="0" stop-color="#676767"/><stop offset="0.98" stop-color="#bebebe"/></linearGradient><linearGradient id="h56" gradientUnits="userSpaceOnUse" x1="678.1" y1="772.5" x2="684.3" y2="789.2"><stop offset="0" stop-color="#676767"/><stop offset="0.92" stop-color="#bebebe"/></linearGradient><linearGradient id="h57" gradientUnits="userSpaceOnUse" x1="687.4" y1="722.2" x2="693.7" y2="739.2"><stop offset="0" stop-color="#646464"/><stop offset="0.95" stop-color="#c1c1c1"/></linearGradient><linearGradient id="h58" gradientUnits="userSpaceOnUse" x1="784" y1="882.4" x2="789.5" y2="897.1"><stop offset="0" stop-color="#666666"/><stop offset="0.79" stop-color="#d2d2d2"/></linearGradient><linearGradient id="h59" gradientUnits="userSpaceOnUse" x1="710.5" y1="857" x2="716.2" y2="872.3"><stop offset="0" stop-color="#6a6a6a"/><stop offset="0.83" stop-color="#c6c6c6"/></linearGradient><linearGradient id="h60" gradientUnits="userSpaceOnUse" x1="767.2" y1="926.6" x2="771.8" y2="939"><stop offset="0" stop-color="#707070"/><stop offset="0.74" stop-color="#cfcfcf"/></linearGradient><linearGradient id="h61" gradientUnits="userSpaceOnUse" x1="751.7" y1="891.6" x2="757.1" y2="906"><stop offset="0" stop-color="#696969"/><stop offset="0.79" stop-color="#cfcfcf"/></linearGradient><linearGradient id="h62" gradientUnits="userSpaceOnUse" x1="651.8" y1="818.8" x2="657.3" y2="833.7"><stop offset="0" stop-color="#727272"/><stop offset="0.87" stop-color="#b7b7b7"/></linearGradient><linearGradient id="h63" gradientUnits="userSpaceOnUse" x1="617.9" y1="775.4" x2="622.9" y2="789"><stop offset="0" stop-color="#7c7c7c"/><stop offset="0.89" stop-color="#a8a8a8"/></linearGradient><linearGradient id="h64" gradientUnits="userSpaceOnUse" x1="646.7" y1="846.7" x2="651.5" y2="859.4"><stop offset="0" stop-color="#7c7c7c"/><stop offset="0.82" stop-color="#b5b5b5"/></linearGradient><linearGradient id="h65" gradientUnits="userSpaceOnUse" x1="635.1" y1="815.4" x2="640.3" y2="829.2"><stop offset="0" stop-color="#7b7b7b"/><stop offset="0.87" stop-color="#aeaeae"/></linearGradient><linearGradient id="h66" gradientUnits="userSpaceOnUse" x1="759.4" y1="949.8" x2="763.2" y2="960.1"><stop offset="0" stop-color="#7c7c7c"/><stop offset="0.69" stop-color="#cacaca"/></linearGradient><linearGradient id="h67" gradientUnits="userSpaceOnUse" x1="682.9" y1="858.4" x2="688.3" y2="873"><stop offset="0" stop-color="#707070"/><stop offset="0.83" stop-color="#bfbfbf"/></linearGradient><linearGradient id="h68" gradientUnits="userSpaceOnUse" x1="676.8" y1="885.3" x2="681.4" y2="897.7"><stop offset="0" stop-color="#7c7c7c"/><stop offset="0.78" stop-color="#bcbcbc"/></linearGradient><linearGradient id="h69" gradientUnits="userSpaceOnUse" x1="739.3" y1="927.2" x2="743.8" y2="939.1"><stop offset="0" stop-color="#767676"/><stop offset="0.74" stop-color="#c9c9c9"/></linearGradient><linearGradient id="h70" gradientUnits="userSpaceOnUse" x1="696.3" y1="893.6" x2="701.2" y2="906.7"><stop offset="0" stop-color="#777777"/><stop offset="0.78" stop-color="#c0c0c0"/></linearGradient><linearGradient id="h71" gradientUnits="userSpaceOnUse" x1="834" y1="903.5" x2="838.9" y2="916.6"><stop offset="0" stop-color="#666666"/><stop offset="0.74" stop-color="#dadada"/></linearGradient><linearGradient id="h72" gradientUnits="userSpaceOnUse" x1="816.7" y1="947.7" x2="820.5" y2="958.1"><stop offset="0" stop-color="#707070"/><stop offset="0.69" stop-color="#d7d7d7"/></linearGradient><linearGradient id="h73" gradientUnits="userSpaceOnUse" x1="904.7" y1="938.9" x2="908.2" y2="948.3"><stop offset="0" stop-color="#6a6a6a"/><stop offset="0.66" stop-color="#e2e2e2"/></linearGradient><linearGradient id="h74" gradientUnits="userSpaceOnUse" x1="851.1" y1="933.5" x2="855.3" y2="944.9"><stop offset="0" stop-color="#696969"/><stop offset="0.70" stop-color="#dcdcdc"/></linearGradient><linearGradient id="h75" gradientUnits="userSpaceOnUse" x1="807.5" y1="970.4" x2="810.6" y2="978.6"><stop offset="0" stop-color="#7c7c7c"/><stop offset="0.65" stop-color="#d2d2d2"/></linearGradient><linearGradient id="h76" gradientUnits="userSpaceOnUse" x1="974.3" y1="954.8" x2="976.3" y2="960.1"><stop offset="0" stop-color="#727272"/><stop offset="0.59" stop-color="#e6e6e6"/></linearGradient><linearGradient id="h77" gradientUnits="userSpaceOnUse" x1="960.2" y1="979.5" x2="960.9" y2="981.3"><stop offset="0" stop-color="#7c7c7c"/><stop offset="0.54" stop-color="#e4e4e4"/></linearGradient><linearGradient id="h78" gradientUnits="userSpaceOnUse" x1="1030.1" y1="948.6" x2="1031.1" y2="951.3"><stop offset="0" stop-color="#7c7c7c"/><stop offset="0.53" stop-color="#e5e5e5"/></linearGradient><linearGradient id="h79" gradientUnits="userSpaceOnUse" x1="989.7" y1="965.2" x2="990.6" y2="967.7"><stop offset="0" stop-color="#7b7b7b"/><stop offset="0.54" stop-color="#e4e4e4"/></linearGradient><linearGradient id="h80" gradientUnits="userSpaceOnUse" x1="836.8" y1="968.6" x2="839.9" y2="976.9"><stop offset="0" stop-color="#767676"/><stop offset="0.65" stop-color="#d8d8d8"/></linearGradient><linearGradient id="h81" gradientUnits="userSpaceOnUse" x1="911.4" y1="984.8" x2="912.8" y2="988.7"><stop offset="0" stop-color="#7c7c7c"/><stop offset="0.57" stop-color="#dfdfdf"/></linearGradient><linearGradient id="h82" gradientUnits="userSpaceOnUse" x1="924.3" y1="960.5" x2="926.8" y2="967.2"><stop offset="0" stop-color="#707070"/><stop offset="0.62" stop-color="#e3e3e3"/></linearGradient><linearGradient id="h83" gradientUnits="userSpaceOnUse" x1="890.9" y1="976.2" x2="893.1" y2="982.2"><stop offset="0" stop-color="#777777"/><stop offset="0.61" stop-color="#dddddd"/></linearGradient><linearGradient id="h84" gradientUnits="userSpaceOnUse" x1="864.1" y1="873.2" x2="869.6" y2="888"><stop offset="0" stop-color="#616161"/><stop offset="0.75" stop-color="#dddddd"/></linearGradient><linearGradient id="h85" gradientUnits="userSpaceOnUse" x1="935.5" y1="909" x2="939.7" y2="920.1"><stop offset="0" stop-color="#656565"/><stop offset="0.68" stop-color="#e5e5e5"/></linearGradient><linearGradient id="h86" gradientUnits="userSpaceOnUse" x1="935.6" y1="830.1" x2="941.4" y2="845.8"><stop offset="0" stop-color="#5e5e5e"/><stop offset="0.75" stop-color="#e0e0e0"/></linearGradient><linearGradient id="h87" gradientUnits="userSpaceOnUse" x1="912.1" y1="873.5" x2="917.4" y2="887.7"><stop offset="0" stop-color="#616161"/><stop offset="0.73" stop-color="#e0e0e0"/></linearGradient><linearGradient id="h88" gradientUnits="userSpaceOnUse" x1="1005.2" y1="925.2" x2="1008" y2="932.8"><stop offset="0" stop-color="#6c6c6c"/><stop offset="0.61" stop-color="#e9e9e9"/></linearGradient><linearGradient id="h89" gradientUnits="userSpaceOnUse" x1="1060.5" y1="919.5" x2="1062.6" y2="925.1"><stop offset="0" stop-color="#767676"/><stop offset="0.55" stop-color="#e9e9e9"/></linearGradient><linearGradient id="h90" gradientUnits="userSpaceOnUse" x1="1080" y1="865.7" x2="1083.7" y2="875.7"><stop offset="0" stop-color="#6c6c6c"/><stop offset="0.60" stop-color="#eaeaea"/></linearGradient><linearGradient id="h91" gradientUnits="userSpaceOnUse" x1="1051.1" y1="906.8" x2="1053.7" y2="914"><stop offset="0" stop-color="#707070"/><stop offset="0.57" stop-color="#eaeaea"/></linearGradient><linearGradient id="h92" gradientUnits="userSpaceOnUse" x1="1007.8" y1="773.6" x2="1014" y2="790.2"><stop offset="0" stop-color="#5e5e5e"/><stop offset="0.74" stop-color="#e2e2e2"/></linearGradient><linearGradient id="h93" gradientUnits="userSpaceOnUse" x1="1082.6" y1="793.2" x2="1087.8" y2="807.2"><stop offset="0" stop-color="#656565"/><stop offset="0.66" stop-color="#e7e7e7"/></linearGradient><linearGradient id="h94" gradientUnits="userSpaceOnUse" x1="1066.9" y1="714.7" x2="1073.2" y2="731.7"><stop offset="0" stop-color="#616161"/><stop offset="0.74" stop-color="#e0e0e0"/></linearGradient><linearGradient id="h95" gradientUnits="userSpaceOnUse" x1="1055.1" y1="761.5" x2="1061.1" y2="777.7"><stop offset="0" stop-color="#616161"/><stop offset="0.72" stop-color="#e3e3e3"/></linearGradient><linearGradient id="h96" gradientUnits="userSpaceOnUse" x1="986.1" y1="901.1" x2="990" y2="911.5"><stop offset="0" stop-color="#676767"/><stop offset="0.65" stop-color="#e8e8e8"/></linearGradient><linearGradient id="h97" gradientUnits="userSpaceOnUse" x1="1062.3" y1="840.9" x2="1066.9" y2="853.1"><stop offset="0" stop-color="#676767"/><stop offset="0.64" stop-color="#e9e9e9"/></linearGradient><linearGradient id="h98" gradientUnits="userSpaceOnUse" x1="987" y1="822" x2="992.7" y2="837.1"><stop offset="0" stop-color="#5f5f5f"/><stop offset="0.72" stop-color="#e4e4e4"/></linearGradient><linearGradient id="h99" gradientUnits="userSpaceOnUse" x1="1014.2" y1="857.7" x2="1018.8" y2="870.3"><stop offset="0" stop-color="#646464"/><stop offset="0.67" stop-color="#e8e8e8"/></linearGradient><linearGradient id="h100" gradientUnits="userSpaceOnUse" x1="817.7" y1="532.2" x2="822.9" y2="546"><stop offset="0" stop-color="#616161"/><stop offset="1.00" stop-color="#c4c4c4"/></linearGradient><linearGradient id="h101" gradientUnits="userSpaceOnUse" x1="897.7" y1="552.8" x2="903.8" y2="569.1"><stop offset="0" stop-color="#5e5e5e"/><stop offset="0.95" stop-color="#c8c8c8"/></linearGradient><linearGradient id="h102" gradientUnits="userSpaceOnUse" x1="877.2" y1="481.6" x2="881.6" y2="493.4"><stop offset="0" stop-color="#656565"/><stop offset="0.99" stop-color="#bfbfbf"/></linearGradient><linearGradient id="h103" gradientUnits="userSpaceOnUse" x1="863.8" y1="519.2" x2="869" y2="533.2"><stop offset="0" stop-color="#616161"/><stop offset="0.99" stop-color="#c4c4c4"/></linearGradient><linearGradient id="h104" gradientUnits="userSpaceOnUse" x1="982.2" y1="586.7" x2="988.8" y2="604.4"><stop offset="0" stop-color="#5e5e5e"/><stop offset="0.88" stop-color="#cacaca"/></linearGradient><linearGradient id="h105" gradientUnits="userSpaceOnUse" x1="1054.9" y1="627.4" x2="1061.5" y2="645.2"><stop offset="0" stop-color="#616161"/><stop offset="0.81" stop-color="#d4d4d4"/></linearGradient><linearGradient id="h106" gradientUnits="userSpaceOnUse" x1="1049.2" y1="550.1" x2="1055.2" y2="566.2"><stop offset="0" stop-color="#656565"/><stop offset="0.85" stop-color="#c9c9c9"/></linearGradient><linearGradient id="h107" gradientUnits="userSpaceOnUse" x1="1031" y1="586.1" x2="1037.5" y2="603.5"><stop offset="0" stop-color="#616161"/><stop offset="0.84" stop-color="#cfcfcf"/></linearGradient><linearGradient id="h108" gradientUnits="userSpaceOnUse" x1="940.1" y1="450" x2="944" y2="460.5"><stop offset="0" stop-color="#6d6d6d"/><stop offset="0.95" stop-color="#b8b8b8"/></linearGradient><linearGradient id="h109" gradientUnits="userSpaceOnUse" x1="1027.6" y1="484.5" x2="1032.6" y2="498"><stop offset="0" stop-color="#6c6c6c"/><stop offset="0.88" stop-color="#bbbbbb"/></linearGradient><linearGradient id="h110" gradientUnits="userSpaceOnUse" x1="994.9" y1="442.1" x2="998.7" y2="452.2"><stop offset="0" stop-color="#767676"/><stop offset="0.90" stop-color="#adadad"/></linearGradient><linearGradient id="h111" gradientUnits="userSpaceOnUse" x1="989" y1="455.3" x2="993.2" y2="466.5"><stop offset="0" stop-color="#717171"/><stop offset="0.91" stop-color="#b3b3b3"/></linearGradient><linearGradient id="h112" gradientUnits="userSpaceOnUse" x1="949.4" y1="547.1" x2="955.5" y2="563.5"><stop offset="0" stop-color="#5f5f5f"/><stop offset="0.92" stop-color="#c6c6c6"/></linearGradient><linearGradient id="h113" gradientUnits="userSpaceOnUse" x1="1017" y1="511.2" x2="1022.6" y2="526.1"><stop offset="0" stop-color="#676767"/><stop offset="0.88" stop-color="#c1c1c1"/></linearGradient><linearGradient id="h114" gradientUnits="userSpaceOnUse" x1="927.9" y1="475.9" x2="932.5" y2="488.1"><stop offset="0" stop-color="#676767"/><stop offset="0.96" stop-color="#bebebe"/></linearGradient><linearGradient id="h115" gradientUnits="userSpaceOnUse" x1="966.2" y1="507.8" x2="971.7" y2="522.4"><stop offset="0" stop-color="#646464"/><stop offset="0.92" stop-color="#c1c1c1"/></linearGradient><linearGradient id="h116" gradientUnits="userSpaceOnUse" x1="606.9" y1="693.9" x2="611.6" y2="706.6"><stop offset="0" stop-color="#7c7c7c"/><stop offset="0.96" stop-color="#a7a7a7"/></linearGradient><linearGradient id="h117" gradientUnits="userSpaceOnUse" x1="627.9" y1="642" x2="632.8" y2="654.9"><stop offset="0" stop-color="#727272"/><stop offset="1.00" stop-color="#b2b2b2"/></linearGradient><linearGradient id="h118" gradientUnits="userSpaceOnUse" x1="616" y1="619.2" x2="619.9" y2="629.5"><stop offset="0" stop-color="#7c7c7c"/><stop offset="1.00" stop-color="#a7a7a7"/></linearGradient><linearGradient id="h119" gradientUnits="userSpaceOnUse" x1="612.9" y1="650.8" x2="617.4" y2="663"><stop offset="0" stop-color="#7b7b7b"/><stop offset="0.99" stop-color="#a8a8a8"/></linearGradient><linearGradient id="h120" gradientUnits="userSpaceOnUse" x1="674.3" y1="589.4" x2="679" y2="602"><stop offset="0" stop-color="#6a6a6a"/><stop offset="1.00" stop-color="#bababa"/></linearGradient><linearGradient id="h121" gradientUnits="userSpaceOnUse" x1="738.4" y1="545.6" x2="743" y2="557.9"><stop offset="0" stop-color="#666666"/><stop offset="1.00" stop-color="#bfbfbf"/></linearGradient><linearGradient id="h122" gradientUnits="userSpaceOnUse" x1="711.1" y1="510.9" x2="714.2" y2="519.2"><stop offset="0" stop-color="#707070"/><stop offset="1.00" stop-color="#b4b4b4"/></linearGradient><linearGradient id="h123" gradientUnits="userSpaceOnUse" x1="705" y1="546.1" x2="709.2" y2="557.4"><stop offset="0" stop-color="#696969"/><stop offset="1.00" stop-color="#bbbbbb"/></linearGradient><linearGradient id="h124" gradientUnits="userSpaceOnUse" x1="697.7" y1="493.3" x2="699.8" y2="498.9"><stop offset="0" stop-color="#7c7c7c"/><stop offset="1.00" stop-color="#a7a7a7"/></linearGradient><linearGradient id="h125" gradientUnits="userSpaceOnUse" x1="647.5" y1="596.3" x2="651.9" y2="608.1"><stop offset="0" stop-color="#707070"/><stop offset="1.00" stop-color="#b3b3b3"/></linearGradient><linearGradient id="h126" gradientUnits="userSpaceOnUse" x1="684.2" y1="518.4" x2="687" y2="526.1"><stop offset="0" stop-color="#767676"/><stop offset="1.00" stop-color="#adadad"/></linearGradient><linearGradient id="h127" gradientUnits="userSpaceOnUse" x1="634.9" y1="574.7" x2="638.3" y2="583.8"><stop offset="0" stop-color="#7c7c7c"/><stop offset="1.00" stop-color="#a7a7a7"/></linearGradient><linearGradient id="h128" gradientUnits="userSpaceOnUse" x1="651.4" y1="560.8" x2="654.9" y2="570.3"><stop offset="0" stop-color="#777777"/><stop offset="1.00" stop-color="#acacac"/></linearGradient><linearGradient id="h129" gradientUnits="userSpaceOnUse" x1="1103.1" y1="693" x2="1109.1" y2="709.3"><stop offset="0" stop-color="#666666"/><stop offset="0.71" stop-color="#dfdfdf"/></linearGradient><linearGradient id="h130" gradientUnits="userSpaceOnUse" x1="1118.5" y1="770.5" x2="1123.6" y2="784.2"><stop offset="0" stop-color="#6a6a6a"/><stop offset="0.64" stop-color="#e6e6e6"/></linearGradient><linearGradient id="h131" gradientUnits="userSpaceOnUse" x1="1149.2" y1="687.3" x2="1154.7" y2="702"><stop offset="0" stop-color="#707070"/><stop offset="0.66" stop-color="#dddddd"/></linearGradient><linearGradient id="h132" gradientUnits="userSpaceOnUse" x1="1127.3" y1="717.1" x2="1132.9" y2="732.3"><stop offset="0" stop-color="#696969"/><stop offset="0.68" stop-color="#e1e1e1"/></linearGradient><linearGradient id="h133" gradientUnits="userSpaceOnUse" x1="1115.3" y1="842.5" x2="1119" y2="852.5"><stop offset="0" stop-color="#727272"/><stop offset="0.57" stop-color="#e8e8e8"/></linearGradient><linearGradient id="h134" gradientUnits="userSpaceOnUse" x1="1094.8" y1="896.1" x2="1097.2" y2="902.5"><stop offset="0" stop-color="#7c7c7c"/><stop offset="0.52" stop-color="#e7e7e7"/></linearGradient><linearGradient id="h135" gradientUnits="userSpaceOnUse" x1="1141.4" y1="834.7" x2="1144.6" y2="843.4"><stop offset="0" stop-color="#7c7c7c"/><stop offset="0.52" stop-color="#e7e7e7"/></linearGradient><linearGradient id="h136" gradientUnits="userSpaceOnUse" x1="1120.6" y1="860.2" x2="1123.6" y2="868.2"><stop offset="0" stop-color="#7b7b7b"/><stop offset="0.53" stop-color="#e6e6e6"/></linearGradient><linearGradient id="h137" gradientUnits="userSpaceOnUse" x1="1172.7" y1="684.4" x2="1177.6" y2="697.3"><stop offset="0" stop-color="#7c7c7c"/><stop offset="0.61" stop-color="#d8d8d8"/></linearGradient><linearGradient id="h138" gradientUnits="userSpaceOnUse" x1="1133.6" y1="795" x2="1138" y2="806.9"><stop offset="0" stop-color="#707070"/><stop offset="0.60" stop-color="#e6e6e6"/></linearGradient><linearGradient id="h139" gradientUnits="userSpaceOnUse" x1="1159.4" y1="788.6" x2="1163.2" y2="798.9"><stop offset="0" stop-color="#7c7c7c"/><stop offset="0.54" stop-color="#e3e3e3"/></linearGradient><linearGradient id="h140" gradientUnits="userSpaceOnUse" x1="1163.7" y1="712.1" x2="1168.7" y2="725.4"><stop offset="0" stop-color="#767676"/><stop offset="0.61" stop-color="#dddddd"/></linearGradient><linearGradient id="h141" gradientUnits="userSpaceOnUse" x1="1156.8" y1="766.4" x2="1161.3" y2="778.3"><stop offset="0" stop-color="#777777"/><stop offset="0.58" stop-color="#e2e2e2"/></linearGradient></defs><polygon points="1179,664.4 1157,589.4 1168.5,665.7" fill="#595959" stroke="#595959" stroke-width="0.6"/><polygon points="1119.9,527 1067.8,473.3 1104.8,516.8" fill="#7d7d7d" stroke="#7d7d7d" stroke-width="0.6"/><polygon points="1067.8,473.3 1001.2,436.5 1039.1,470.8" fill="#969696" stroke="#969696" stroke-width="0.6"/><polygon points="1104.8,516.8 1039.1,470.8 1066.7,525.3" fill="#8e8e8e" stroke="#8e8e8e" stroke-width="0.6"/><polygon points="1067.8,473.3 1039.1,470.8 1104.8,516.8" fill="#8e8e8e" stroke="#8e8e8e" stroke-width="0.6"/><polygon points="1168.5,665.7 1130.4,590.5 1135,670.2" fill="#686868" stroke="#686868" stroke-width="0.6"/><polygon points="1130.4,590.5 1066.7,525.3 1081,596.2" fill="#848484" stroke="#848484" stroke-width="0.6"/><polygon points="1135,670.2 1081,596.2 1080,677.6" fill="#797979" stroke="#797979" stroke-width="0.6"/><polygon points="1130.4,590.5 1081,596.2 1135,670.2" fill="#777777" stroke="#777777" stroke-width="0.6"/><polygon points="1119.9,527 1104.8,516.8 1157,589.4" fill="#717171" stroke="#717171" stroke-width="0.6"/><polygon points="1104.8,516.8 1066.7,525.3 1130.4,590.5" fill="#838383" stroke="#838383" stroke-width="0.6"/><polygon points="1157,589.4 1130.4,590.5 1168.5,665.7" fill="#666666" stroke="#666666" stroke-width="0.6"/><polygon points="1104.8,516.8 1130.4,590.5 1157,589.4" fill="#737373" stroke="#737373" stroke-width="0.6"/><polygon points="1001.2,436.5 927.8,416 949.9,434.4" fill="#aeaeae" stroke="#aeaeae" stroke-width="0.6"/><polygon points="927.8,416 853.1,417.9 870.9,421.1" fill="#bbbbbb" stroke="#bbbbbb" stroke-width="0.6"/><polygon points="949.9,434.4 870.9,421.1 892,453.9" fill="#bebebe" stroke="#bebebe" stroke-width="0.6"/><polygon points="927.8,416 870.9,421.1 949.9,434.4" fill="#b6b6b6" stroke="#b6b6b6" stroke-width="0.6"/><polygon points="782.8,436.5 714.6,474.5 721.1,482.8" fill="#cfcfcf" stroke="#cfcfcf" stroke-width="0.6"/><polygon points="892,453.9 800.9,455.8 832.1,494.5" fill="#c8c8c8" stroke="#c8c8c8" stroke-width="0.6"/><polygon points="800.9,455.8 721.1,482.8 741.8,509.4" fill="#d1d1d1" stroke="#d1d1d1" stroke-width="0.6"/><polygon points="832.1,494.5 741.8,509.4 775.8,553.2" fill="#cdcdcd" stroke="#cdcdcd" stroke-width="0.6"/><polygon points="800.9,455.8 741.8,509.4 832.1,494.5" fill="#cecece" stroke="#cecece" stroke-width="0.6"/><polygon points="853.1,417.9 782.8,436.5 870.9,421.1" fill="#c4c4c4" stroke="#c4c4c4" stroke-width="0.6"/><polygon points="782.8,436.5 721.1,482.8 800.9,455.8" fill="#cfcfcf" stroke="#cfcfcf" stroke-width="0.6"/><polygon points="870.9,421.1 800.9,455.8 892,453.9" fill="#c6c6c6" stroke="#c6c6c6" stroke-width="0.6"/><polygon points="782.8,436.5 800.9,455.8 870.9,421.1" fill="#cacaca" stroke="#cacaca" stroke-width="0.6"/><polygon points="820.2,878.8 890.2,841.8 796.2,803.4" fill="#8b8b8b" stroke="#8b8b8b" stroke-width="0.6"/><polygon points="890.2,841.8 961.3,792.6 869.4,758.5" fill="#898989" stroke="#898989" stroke-width="0.6"/><polygon points="796.2,803.4 869.4,758.5 779.9,718.5" fill="#a1a1a1" stroke="#a1a1a1" stroke-width="0.6"/><polygon points="890.2,841.8 869.4,758.5 796.2,803.4" fill="#919191" stroke="#919191" stroke-width="0.6"/><polygon points="961.3,792.6 1026.7,736 951.3,695.1" fill="#878787" stroke="#878787" stroke-width="0.6"/><polygon points="1026.7,736 1080,677.6 1013,635.5" fill="#858585" stroke="#858585" stroke-width="0.6"/><polygon points="951.3,695.1 1013,635.5 934.8,598.4" fill="#9d9d9d" stroke="#9d9d9d" stroke-width="0.6"/><polygon points="1026.7,736 1013,635.5 951.3,695.1" fill="#8c8c8c" stroke="#8c8c8c" stroke-width="0.6"/><polygon points="779.9,718.5 855.4,655.9 772.9,632.3" fill="#b3b3b3" stroke="#b3b3b3" stroke-width="0.6"/><polygon points="855.4,655.9 934.8,598.4 853.1,570.1" fill="#b1b1b1" stroke="#b1b1b1" stroke-width="0.6"/><polygon points="772.9,632.3 853.1,570.1 775.8,553.2" fill="#c1c1c1" stroke="#c1c1c1" stroke-width="0.6"/><polygon points="855.4,655.9 853.1,570.1 772.9,632.3" fill="#bababa" stroke="#bababa" stroke-width="0.6"/><polygon points="961.3,792.6 951.3,695.1 869.4,758.5" fill="#909090" stroke="#909090" stroke-width="0.6"/><polygon points="951.3,695.1 934.8,598.4 855.4,655.9" fill="#a5a5a5" stroke="#a5a5a5" stroke-width="0.6"/><polygon points="869.4,758.5 855.4,655.9 779.9,718.5" fill="#a7a7a7" stroke="#a7a7a7" stroke-width="0.6"/><polygon points="951.3,695.1 855.4,655.9 869.4,758.5" fill="#a0a0a0" stroke="#a0a0a0" stroke-width="0.6"/><polygon points="820.2,878.8 796.2,803.4 741.1,859.5" fill="#919191" stroke="#919191" stroke-width="0.6"/><polygon points="796.2,803.4 779.9,718.5 717.7,778.2" fill="#a7a7a7" stroke="#a7a7a7" stroke-width="0.6"/><polygon points="741.1,859.5 717.7,778.2 676,828" fill="#9e9e9e" stroke="#9e9e9e" stroke-width="0.6"/><polygon points="796.2,803.4 717.7,778.2 741.1,859.5" fill="#9b9b9b" stroke="#9b9b9b" stroke-width="0.6"/><polygon points="779.9,718.5 772.9,632.3 704,677.6" fill="#b9b9b9" stroke="#b9b9b9" stroke-width="0.6"/><polygon points="772.9,632.3 775.8,553.2 704.8,593.1" fill="#c7c7c7" stroke="#c7c7c7" stroke-width="0.6"/><polygon points="704,677.6 704.8,593.1 650.5,640.9" fill="#c6c6c6" stroke="#c6c6c6" stroke-width="0.6"/><polygon points="772.9,632.3 704.8,593.1 704,677.6" fill="#c4c4c4" stroke="#c4c4c4" stroke-width="0.6"/><polygon points="676,828 650.7,736.2 630,787.7" fill="#aaaaaa" stroke="#aaaaaa" stroke-width="0.6"/><polygon points="650.7,736.2 650.5,640.9 617,692.2" fill="#bfbfbf" stroke="#bfbfbf" stroke-width="0.6"/><polygon points="630,787.7 617,692.2 606.2,742.4" fill="#b2b2b2" stroke="#b2b2b2" stroke-width="0.6"/><polygon points="650.7,736.2 617,692.2 630,787.7" fill="#b4b4b4" stroke="#b4b4b4" stroke-width="0.6"/><polygon points="779.9,718.5 704,677.6 717.7,778.2" fill="#b2b2b2" stroke="#b2b2b2" stroke-width="0.6"/><polygon points="704,677.6 650.5,640.9 650.7,736.2" fill="#bfbfbf" stroke="#bfbfbf" stroke-width="0.6"/><polygon points="717.7,778.2 650.7,736.2 676,828" fill="#aaaaaa" stroke="#aaaaaa" stroke-width="0.6"/><polygon points="704,677.6 650.7,736.2 717.7,778.2" fill="#b5b5b5" stroke="#b5b5b5" stroke-width="0.6"/><polygon points="820.2,878.8 741.1,859.5 799.2,930.3" fill="#828282" stroke="#828282" stroke-width="0.6"/><polygon points="741.1,859.5 676,828 723.1,906" fill="#909090" stroke="#909090" stroke-width="0.6"/><polygon points="799.2,930.3 723.1,906 786.4,961.7" fill="#737373" stroke="#737373" stroke-width="0.6"/><polygon points="741.1,859.5 723.1,906 799.2,930.3" fill="#828282" stroke="#828282" stroke-width="0.6"/><polygon points="676,828 630,787.7 658.1,862.8" fill="#9b9b9b" stroke="#9b9b9b" stroke-width="0.6"/><polygon points="630,787.7 606.2,742.4 625.1,816.2" fill="#a3a3a3" stroke="#a3a3a3" stroke-width="0.6"/><polygon points="658.1,862.8 625.1,816.2 664.1,880.1" fill="#8b8b8b" stroke="#8b8b8b" stroke-width="0.6"/><polygon points="630,787.7 625.1,816.2 658.1,862.8" fill="#9b9b9b" stroke="#9b9b9b" stroke-width="0.6"/><polygon points="786.4,961.7 715.3,931.5 782.4,971.6" fill="#666666" stroke="#666666" stroke-width="0.6"/><polygon points="676,828 658.1,862.8 723.1,906" fill="#8f8f8f" stroke="#8f8f8f" stroke-width="0.6"/><polygon points="658.1,862.8 664.1,880.1 715.3,931.5" fill="#808080" stroke="#808080" stroke-width="0.6"/><polygon points="723.1,906 715.3,931.5 786.4,961.7" fill="#737373" stroke="#737373" stroke-width="0.6"/><polygon points="658.1,862.8 715.3,931.5 723.1,906" fill="#818181" stroke="#818181" stroke-width="0.6"/><polygon points="820.2,878.8 799.2,930.3 890.2,920.5" fill="#737373" stroke="#737373" stroke-width="0.6"/><polygon points="799.2,930.3 786.4,961.7 870.5,966.2" fill="#656565" stroke="#656565" stroke-width="0.6"/><polygon points="890.2,920.5 870.5,966.2 958.8,943.7" fill="#5b5b5b" stroke="#5b5b5b" stroke-width="0.6"/><polygon points="799.2,930.3 870.5,966.2 890.2,920.5" fill="#696969" stroke="#696969" stroke-width="0.6"/><polygon points="786.4,961.7 782.4,971.6 858.3,989.9" fill="#575757" stroke="#575757" stroke-width="0.6"/><polygon points="958.8,943.7 947.2,981.1 1019.8,947.1" fill="#454545" stroke="#454545" stroke-width="0.6"/><polygon points="947.2,981.1 930.9,989.2 1003.4,970.9" fill="#363636" stroke="#363636" stroke-width="0.6"/><polygon points="1019.8,947.1 1003.4,970.9 1068.7,931.5" fill="#333333" stroke="#333333" stroke-width="0.6"/><polygon points="947.2,981.1 1003.4,970.9 1019.8,947.1" fill="#383838" stroke="#383838" stroke-width="0.6"/><polygon points="786.4,961.7 858.3,989.9 870.5,966.2" fill="#575757" stroke="#575757" stroke-width="0.6"/><polygon points="858.3,989.9 930.9,989.2 947.2,981.1" fill="#3f3f3f" stroke="#3f3f3f" stroke-width="0.6"/><polygon points="870.5,966.2 947.2,981.1 958.8,943.7" fill="#4e4e4e" stroke="#4e4e4e" stroke-width="0.6"/><polygon points="858.3,989.9 947.2,981.1 870.5,966.2" fill="#4b4b4b" stroke="#4b4b4b" stroke-width="0.6"/><polygon points="820.2,878.8 890.2,920.5 890.2,841.8" fill="#797979" stroke="#797979" stroke-width="0.6"/><polygon points="890.2,920.5 958.8,943.7 963.8,878.8" fill="#616161" stroke="#616161" stroke-width="0.6"/><polygon points="890.2,841.8 963.8,878.8 961.3,792.6" fill="#777777" stroke="#777777" stroke-width="0.6"/><polygon points="890.2,920.5 963.8,878.8 890.2,841.8" fill="#727272" stroke="#727272" stroke-width="0.6"/><polygon points="958.8,943.7 1019.8,947.1 1041.1,895.8" fill="#4b4b4b" stroke="#4b4b4b" stroke-width="0.6"/><polygon points="1019.8,947.1 1068.7,931.5 1096,888.1" fill="#383838" stroke="#383838" stroke-width="0.6"/><polygon points="1041.1,895.8 1096,888.1 1108,828" fill="#484848" stroke="#484848" stroke-width="0.6"/><polygon points="1019.8,947.1 1096,888.1 1041.1,895.8" fill="#414141" stroke="#414141" stroke-width="0.6"/><polygon points="961.3,792.6 1044.1,816.6 1026.7,736" fill="#757575" stroke="#757575" stroke-width="0.6"/><polygon points="1044.1,816.6 1108,828 1102.8,755.8" fill="#5c5c5c" stroke="#5c5c5c" stroke-width="0.6"/><polygon points="1026.7,736 1102.8,755.8 1080,677.6" fill="#737373" stroke="#737373" stroke-width="0.6"/><polygon points="1044.1,816.6 1102.8,755.8 1026.7,736" fill="#6d6d6d" stroke="#6d6d6d" stroke-width="0.6"/><polygon points="958.8,943.7 1041.1,895.8 963.8,878.8" fill="#585858" stroke="#585858" stroke-width="0.6"/><polygon points="1041.1,895.8 1108,828 1044.1,816.6" fill="#565656" stroke="#565656" stroke-width="0.6"/><polygon points="963.8,878.8 1044.1,816.6 961.3,792.6" fill="#6f6f6f" stroke="#6f6f6f" stroke-width="0.6"/><polygon points="1041.1,895.8 1044.1,816.6 963.8,878.8" fill="#5e5e5e" stroke="#5e5e5e" stroke-width="0.6"/><polygon points="775.8,553.2 853.1,570.1 832.1,494.5" fill="#c5c5c5" stroke="#c5c5c5" stroke-width="0.6"/><polygon points="853.1,570.1 934.8,598.4 914.2,514.8" fill="#b5b5b5" stroke="#b5b5b5" stroke-width="0.6"/><polygon points="832.1,494.5 914.2,514.8 892,453.9" fill="#c0c0c0" stroke="#c0c0c0" stroke-width="0.6"/><polygon points="853.1,570.1 914.2,514.8 832.1,494.5" fill="#c0c0c0" stroke="#c0c0c0" stroke-width="0.6"/><polygon points="934.8,598.4 1013,635.5 1008.2,553.2" fill="#a0a0a0" stroke="#a0a0a0" stroke-width="0.6"/><polygon points="1013,635.5 1080,677.6 1081,596.2" fill="#898989" stroke="#898989" stroke-width="0.6"/><polygon points="1008.2,553.2 1081,596.2 1066.7,525.3" fill="#949494" stroke="#949494" stroke-width="0.6"/><polygon points="1013,635.5 1081,596.2 1008.2,553.2" fill="#929292" stroke="#929292" stroke-width="0.6"/><polygon points="892,453.9 984.2,477.9 949.9,434.4" fill="#b6b6b6" stroke="#b6b6b6" stroke-width="0.6"/><polygon points="984.2,477.9 1066.7,525.3 1039.1,470.8" fill="#9e9e9e" stroke="#9e9e9e" stroke-width="0.6"/><polygon points="949.9,434.4 1039.1,470.8 1001.2,436.5" fill="#a6a6a6" stroke="#a6a6a6" stroke-width="0.6"/><polygon points="984.2,477.9 1039.1,470.8 949.9,434.4" fill="#a9a9a9" stroke="#a9a9a9" stroke-width="0.6"/><polygon points="934.8,598.4 1008.2,553.2 914.2,514.8" fill="#acacac" stroke="#acacac" stroke-width="0.6"/><polygon points="1008.2,553.2 1066.7,525.3 984.2,477.9" fill="#a0a0a0" stroke="#a0a0a0" stroke-width="0.6"/><polygon points="914.2,514.8 984.2,477.9 892,453.9" fill="#b7b7b7" stroke="#b7b7b7" stroke-width="0.6"/><polygon points="1008.2,553.2 984.2,477.9 914.2,514.8" fill="#acacac" stroke="#acacac" stroke-width="0.6"/><polygon points="606.2,742.4 617,692.2 604.7,666.3" fill="#b9b9b9" stroke="#b9b9b9" stroke-width="0.6"/><polygon points="617,692.2 650.5,640.9 624,612.4" fill="#c6c6c6" stroke="#c6c6c6" stroke-width="0.6"/><polygon points="604.7,666.3 624,612.4 625.2,594.4" fill="#c3c3c3" stroke="#c3c3c3" stroke-width="0.6"/><polygon points="617,692.2 624,612.4 604.7,666.3" fill="#c0c0c0" stroke="#c0c0c0" stroke-width="0.6"/><polygon points="650.5,640.9 704.8,593.1 675.1,553.3" fill="#cdcdcd" stroke="#cdcdcd" stroke-width="0.6"/><polygon points="704.8,593.1 775.8,553.2 741.8,509.4" fill="#cecece" stroke="#cecece" stroke-width="0.6"/><polygon points="675.1,553.3 741.8,509.4 721.1,482.8" fill="#d3d3d3" stroke="#d3d3d3" stroke-width="0.6"/><polygon points="704.8,593.1 741.8,509.4 675.1,553.3" fill="#d0d0d0" stroke="#d0d0d0" stroke-width="0.6"/><polygon points="660.8,531 721.1,482.8 714.6,474.5" fill="#d1d1d1" stroke="#d1d1d1" stroke-width="0.6"/><polygon points="650.5,640.9 675.1,553.3 624,612.4" fill="#cccccc" stroke="#cccccc" stroke-width="0.6"/><polygon points="675.1,553.3 721.1,482.8 660.8,531" fill="#d2d2d2" stroke="#d2d2d2" stroke-width="0.6"/><polygon points="624,612.4 660.8,531 625.2,594.4" fill="#cacaca" stroke="#cacaca" stroke-width="0.6"/><polygon points="675.1,553.3 660.8,531 624,612.4" fill="#cfcfcf" stroke="#cfcfcf" stroke-width="0.6"/><polygon points="1080,677.6 1102.8,755.8 1135,670.2" fill="#6b6b6b" stroke="#6b6b6b" stroke-width="0.6"/><polygon points="1102.8,755.8 1108,828 1151.9,748.2" fill="#555555" stroke="#555555" stroke-width="0.6"/><polygon points="1135,670.2 1151.9,748.2 1168.5,665.7" fill="#5a5a5a" stroke="#5a5a5a" stroke-width="0.6"/><polygon points="1102.8,755.8 1151.9,748.2 1135,670.2" fill="#616161" stroke="#616161" stroke-width="0.6"/><polygon points="1108,828 1096,888.1 1147,826.3" fill="#414141" stroke="#414141" stroke-width="0.6"/><polygon points="1096,888.1 1068.7,931.5 1123.1,878.2" fill="#313131" stroke="#313131" stroke-width="0.6"/><polygon points="1147,826.3 1123.1,878.2 1158.9,812.6" fill="#303030" stroke="#303030" stroke-width="0.6"/><polygon points="1096,888.1 1123.1,878.2 1147,826.3" fill="#343434" stroke="#343434" stroke-width="0.6"/><polygon points="1168.5,665.7 1177.8,742.4 1179,664.4" fill="#4b4b4b" stroke="#4b4b4b" stroke-width="0.6"/><polygon points="1108,828 1147,826.3 1151.9,748.2" fill="#484848" stroke="#484848" stroke-width="0.6"/><polygon points="1147,826.3 1158.9,812.6 1177.8,742.4" fill="#373737" stroke="#373737" stroke-width="0.6"/><polygon points="1151.9,748.2 1177.8,742.4 1168.5,665.7" fill="#4d4d4d" stroke="#4d4d4d" stroke-width="0.6"/><polygon points="1147,826.3 1177.8,742.4 1151.9,748.2" fill="#434343" stroke="#434343" stroke-width="0.6"/><polygon points="1166.3,633.2 1166.3,634.2 1166.4,635.5 1166.6,637.1 1167,638.9 1167.4,640.7 1167.9,642.5 1168.4,644.1 1168.9,645.4 1169.4,646.3 1169.7,646.8 1170,646.8 1170.1,646.3 1170.1,645.3 1170,644 1169.7,642.4 1169.3,640.6 1168.9,638.8 1168.4,637 1167.9,635.4 1167.4,634.1 1167,633.2 1166.6,632.8 1166.4,632.8" fill="url(#h0)"/><polygon points="1093,501 1093.5,501.7 1094.3,502.6 1095.4,503.8 1096.6,505.1 1097.8,506.4 1099,507.7 1100.1,508.8 1101.1,509.7 1101.8,510.4 1102.2,510.7 1102.3,510.7 1102.1,510.3 1101.5,509.7 1100.7,508.7 1099.7,507.6 1098.5,506.3 1097.3,504.9 1096.1,503.7 1094.9,502.5 1094,501.6 1093.3,500.9 1092.9,500.6 1092.8,500.6" fill="url(#h1)"/><polygon points="1030.1,456.8 1030.7,457.5 1031.7,458.3 1032.9,459.3 1034.4,460.3 1036.1,461.3 1037.7,462.3 1039.2,463.1 1040.5,463.7 1041.5,464 1042.1,464.1 1042.3,463.9 1042.1,463.5 1041.5,462.8 1040.6,462 1039.3,461 1037.8,460 1036.2,459 1034.6,458 1033.1,457.3 1031.8,456.7 1030.8,456.3 1030.1,456.2 1029.9,456.4" fill="url(#h2)"/><polygon points="1064.2,499.9 1064.5,501.1 1065.2,502.4 1066.2,503.9 1067.6,505.4 1069.1,506.9 1070.7,508.1 1072.3,509.1 1073.8,509.8 1075,510 1075.9,509.9 1076.4,509.4 1076.5,508.5 1076.2,507.4 1075.5,506 1074.5,504.5 1073.1,503 1071.6,501.6 1070,500.3 1068.4,499.3 1067,498.7 1065.7,498.4 1064.8,498.5 1064.3,499" fill="url(#h3)"/><polygon points="1068.5,486.8 1069.9,488 1071.5,489.2 1072.9,490.2 1074.3,490.9 1075.3,491.5 1076.1,491.7 1076.5,491.5 1076.5,491.1 1076.1,490.4 1075.3,489.4 1074.2,488.3 1072.9,487.1 1071.4,485.8 1069.9,484.7 1068.4,483.7 1067.1,482.9 1066,482.4 1065.3,482.2 1064.9,482.3 1064.9,482.7 1065.3,483.5 1066,484.4 1067.1,485.5" fill="url(#h4)"/><polygon points="1141.4,635.6 1141.1,637 1141,638.8 1141.1,640.8 1141.5,642.8 1142.2,644.9 1143,646.7 1143.9,648.3 1144.9,649.4 1145.9,650 1146.8,650.1 1147.5,649.6 1148.1,648.7 1148.4,647.3 1148.6,645.5 1148.4,643.5 1148,641.4 1147.4,639.4 1146.6,637.5 1145.7,636 1144.7,634.9 1143.7,634.3 1142.8,634.2 1142,634.6" fill="url(#h5)"/><polygon points="1087.1,564.7 1086.8,566.2 1086.9,567.9 1087.4,569.9 1088.3,571.8 1089.5,573.8 1091,575.5 1092.5,576.8 1094.1,577.8 1095.6,578.2 1096.9,578.1 1098,577.6 1098.7,576.5 1099,575.1 1098.8,573.3 1098.3,571.4 1097.4,569.4 1096.2,567.5 1094.8,565.8 1093.2,564.5 1091.7,563.5 1090.2,563.1 1088.8,563.1 1087.8,563.7" fill="url(#h6)"/><polygon points="1093.9,641.2 1093.1,643 1092.7,645 1092.8,647.3 1093.2,649.6 1094,651.8 1095.2,653.7 1096.6,655.3 1098.2,656.4 1099.8,656.8 1101.3,656.7 1102.7,656 1103.8,654.7 1104.6,653 1105,651 1104.9,648.7 1104.5,646.4 1103.7,644.2 1102.5,642.3 1101.1,640.7 1099.6,639.7 1097.9,639.2 1096.4,639.3 1095,640" fill="url(#h7)"/><polygon points="1110.7,619.6 1111.5,621.7 1112.6,623.7 1113.9,625.3 1115.3,626.5 1116.7,627.2 1118.1,627.3 1119.3,626.8 1120.2,625.9 1120.8,624.4 1121.1,622.6 1121,620.5 1120.6,618.3 1119.8,616.2 1118.7,614.3 1117.4,612.6 1116,611.4 1114.6,610.7 1113.3,610.6 1112.1,611.1 1111.1,612 1110.5,613.5 1110.2,615.3 1110.3,617.4" fill="url(#h8)"/><polygon points="1126.1,543.6 1127.2,545.2 1128.2,546.7 1129.2,548 1130,549.1 1130.7,549.8 1131.1,550.2 1131.2,550.2 1131.1,549.8 1130.8,549 1130.1,547.9 1129.3,546.6 1128.4,545.1 1127.4,543.6 1126.3,542.1 1125.4,540.8 1124.5,539.7 1123.9,538.9 1123.5,538.6 1123.3,538.6 1123.4,539 1123.8,539.7 1124.4,540.8 1125.2,542.2" fill="url(#h9)"/><polygon points="1097.5,544.9 1098.8,546.6 1100.2,548.1 1101.6,549.4 1103,550.3 1104.2,550.8 1105.2,550.8 1105.9,550.4 1106.2,549.5 1106.2,548.3 1105.8,546.7 1105.1,545.1 1104,543.3 1102.8,541.6 1101.4,540.1 1099.9,538.8 1098.6,537.9 1097.3,537.4 1096.3,537.4 1095.6,537.8 1095.3,538.7 1095.3,539.9 1095.7,541.4 1096.5,543.1" fill="url(#h10)"/><polygon points="1150,615.3 1150.7,617.2 1151.4,619 1152.3,620.5 1153.1,621.6 1153.8,622.3 1154.4,622.5 1154.9,622.2 1155.2,621.4 1155.2,620.2 1155.1,618.7 1154.7,616.9 1154.2,615 1153.5,613.1 1152.7,611.4 1151.9,609.9 1151.1,608.8 1150.3,608.1 1149.7,607.8 1149.2,608.1 1149,608.9 1148.9,610.1 1149.1,611.6 1149.4,613.4" fill="url(#h11)"/><polygon points="1132.9,571.3 1133.7,572 1134.4,572.2 1134.8,572 1135,571.3 1134.9,570.2 1134.5,568.8 1133.8,567.2 1133,565.5 1132,563.7 1130.9,562.1 1129.8,560.8 1128.8,559.7 1127.9,559 1127.3,558.8 1126.8,559 1126.7,559.7 1126.8,560.8 1127.2,562.2 1127.8,563.8 1128.7,565.5 1129.7,567.3 1130.8,568.9 1131.9,570.3" fill="url(#h12)"/><polygon points="953,427 952.5,427.2 952.6,427.5 953.1,427.9 954,428.3 955.4,428.8 957,429.3 958.8,429.8 960.7,430.2 962.5,430.5 964.1,430.7 965.4,430.8 966.3,430.7 966.7,430.6 966.7,430.3 966.1,429.9 965.2,429.4 963.8,429 962.2,428.5 960.4,428 958.5,427.6 956.8,427.3 955.2,427.1 953.9,427" fill="url(#h13)"/><polygon points="877.4,418.5 877,418.6 877,418.7 877.6,418.7 878.5,418.7 879.8,418.8 881.4,418.7 883.2,418.7 885,418.6 886.8,418.5 888.3,418.4 889.6,418.3 890.4,418.2 890.8,418.1 890.8,418 890.3,417.9 889.3,417.9 888,417.9 886.4,417.9 884.6,418 882.8,418.1 881.1,418.2 879.5,418.3 878.3,418.4" fill="url(#h14)"/><polygon points="896.8,435.1 896.3,435.8 896.3,436.5 896.9,437.2 897.9,437.9 899.4,438.4 901.2,438.8 903.3,439.1 905.4,439.1 907.4,439 909.2,438.7 910.7,438.2 911.7,437.6 912.2,436.9 912.2,436.1 911.6,435.4 910.6,434.8 909.1,434.2 907.2,433.8 905.2,433.6 903.1,433.5 901.1,433.6 899.3,434 897.9,434.4" fill="url(#h15)"/><polygon points="911.2,424.2 912.8,424.6 914.6,424.9 916.5,425.1 918.4,425.2 920.2,425.3 921.6,425.2 922.7,425 923.4,424.8 923.6,424.4 923.2,424.1 922.4,423.7 921.2,423.3 919.6,423 917.8,422.7 915.9,422.4 914,422.3 912.3,422.3 910.8,422.3 909.7,422.5 909,422.8 908.8,423.1 909.1,423.5 910,423.8" fill="url(#h16)"/><polygon points="733.6,467.8 733.4,468.3 733.6,468.4 734.1,468.4 735.1,468 736.3,467.4 737.8,466.6 739.4,465.7 741,464.7 742.5,463.7 743.8,462.7 744.8,461.9 745.5,461.2 745.7,460.8 745.6,460.6 745,460.7 744,461 742.8,461.6 741.3,462.4 739.7,463.3 738.1,464.3 736.6,465.4 735.3,466.3 734.3,467.2" fill="url(#h17)"/><polygon points="833.4,468.1 833.1,469.3 833.5,470.4 834.4,471.4 835.7,472.1 837.5,472.6 839.6,472.7 841.8,472.5 844,472 846,471.2 847.8,470.2 849.1,469 849.9,467.7 850.1,466.5 849.8,465.4 848.9,464.4 847.5,463.7 845.7,463.3 843.6,463.1 841.4,463.3 839.2,463.9 837.2,464.6 835.5,465.7 834.2,466.8" fill="url(#h18)"/><polygon points="747.6,484.9 747.3,486 747.5,486.9 748.2,487.4 749.4,487.7 750.9,487.6 752.6,487.1 754.5,486.4 756.3,485.4 758.1,484.1 759.6,482.8 760.8,481.5 761.5,480.2 761.7,479.1 761.5,478.3 760.8,477.7 759.7,477.5 758.2,477.6 756.5,478 754.6,478.8 752.7,479.8 751,481 749.5,482.3 748.3,483.7" fill="url(#h19)"/><polygon points="774.9,520.3 774.8,521.9 775.3,523.4 776.3,524.6 777.8,525.4 779.6,525.7 781.7,525.6 783.9,525 786,524 788,522.7 789.6,521.1 790.7,519.3 791.4,517.6 791.5,515.9 791,514.4 790,513.3 788.5,512.5 786.6,512.1 784.5,512.3 782.3,512.8 780.2,513.8 778.3,515.2 776.7,516.8 775.5,518.5" fill="url(#h20)"/><polygon points="785.6,491.8 787.2,492.2 789.2,492.1 791.3,491.7 793.4,490.9 795.4,489.8 797.1,488.5 798.5,487 799.3,485.5 799.7,484.1 799.4,482.8 798.7,481.8 797.4,481 795.8,480.7 793.8,480.7 791.7,481.2 789.6,482 787.6,483.1 785.9,484.4 784.6,485.8 783.7,487.3 783.4,488.8 783.6,490.1 784.3,491.1" fill="url(#h21)"/><polygon points="830.1,426.6 831.4,426.4 833,426.2 834.8,425.8 836.6,425.5 838.3,425.1 839.9,424.7 841.2,424.3 842,424 842.5,423.8 842.4,423.7 841.9,423.6 841,423.7 839.7,423.9 838.1,424.1 836.4,424.4 834.6,424.8 832.8,425.2 831.3,425.6 830,425.9 829.1,426.2 828.7,426.5 828.7,426.6 829.2,426.6" fill="url(#h22)"/><polygon points="763.1,462.1 764.5,461.9 766.2,461.3 768,460.6 769.8,459.7 771.5,458.8 773,457.7 774.1,456.8 774.9,455.9 775.2,455.2 775,454.7 774.4,454.4 773.4,454.4 772,454.7 770.3,455.2 768.5,455.9 766.7,456.8 765,457.7 763.5,458.8 762.4,459.7 761.6,460.6 761.3,461.3 761.4,461.8 762.1,462.1" fill="url(#h23)"/><polygon points="848.8,446.3 850.4,446.7 852.4,446.7 854.5,446.6 856.5,446.3 858.5,445.7 860.2,445 861.5,444.2 862.4,443.3 862.7,442.5 862.4,441.7 861.7,441 860.4,440.5 858.8,440.2 856.8,440.2 854.8,440.3 852.7,440.6 850.7,441.2 849,441.9 847.7,442.7 846.9,443.5 846.6,444.4 846.8,445.2 847.5,445.8" fill="url(#h24)"/><polygon points="819.7,439.2 821.5,438.6 823.1,437.9 824.4,437.1 825.2,436.5 825.6,435.9 825.4,435.4 824.8,435.1 823.7,435 822.3,435 820.5,435.2 818.6,435.6 816.7,436.2 814.9,436.8 813.3,437.5 812,438.2 811.2,438.9 810.8,439.5 811,440 811.6,440.3 812.7,440.4 814.1,440.4 815.9,440.1 817.8,439.7" fill="url(#h25)"/><polygon points="843.3,837.3 841.6,835.5 839.5,834.1 837.1,833.2 834.6,832.8 832.2,833.1 830,833.9 828.1,835.3 826.8,837 826,839.1 825.9,841.3 826.4,843.6 827.6,845.7 829.3,847.5 831.4,848.9 833.8,849.8 836.3,850.1 838.7,849.9 841,849 842.8,847.7 844.2,845.9 844.9,843.9 845,841.6 844.5,839.4" fill="url(#h26)"/><polygon points="915.2,792.1 913.4,790.3 911.2,789 908.7,788.3 906,788.3 903.5,788.9 901.2,790.1 899.2,791.8 897.8,794 897.1,796.4 897,798.9 897.6,801.3 898.8,803.4 900.6,805.2 902.8,806.5 905.3,807.2 907.9,807.3 910.5,806.7 912.8,805.4 914.7,803.7 916.1,801.6 916.9,799.2 917,796.7 916.4,794.3" fill="url(#h27)"/><polygon points="823.1,755.2 821.5,753.1 819.4,751.6 817,750.6 814.4,750.3 812,750.6 809.7,751.6 807.8,753.2 806.3,755.3 805.5,757.7 805.3,760.2 805.8,762.8 806.9,765.2 808.6,767.2 810.7,768.8 813.1,769.7 815.6,770.1 818.1,769.7 820.4,768.7 822.3,767.1 823.7,765.1 824.5,762.7 824.7,760.1 824.3,757.5" fill="url(#h28)"/><polygon points="849.5,792.2 847.1,792.9 845,794.2 843.4,796.1 842.4,798.2 842,800.6 842.2,803 843.2,805.4 844.7,807.4 846.7,809 849.1,810.1 851.6,810.7 854.2,810.5 856.6,809.8 858.7,808.5 860.3,806.7 861.3,804.5 861.7,802.1 861.5,799.7 860.5,797.4 859,795.3 857,793.7 854.6,792.6 852.1,792" fill="url(#h29)"/><polygon points="987.4,734.8 985.6,733.1 983.4,731.9 981,731.4 978.5,731.5 976,732.3 973.9,733.8 972.1,735.7 970.9,738 970.3,740.6 970.3,743.2 971,745.7 972.3,747.8 974.1,749.6 976.3,750.7 978.8,751.3 981.3,751.1 983.7,750.3 985.8,748.9 987.6,746.9 988.8,744.6 989.4,742.1 989.4,739.5 988.7,737" fill="url(#h30)"/><polygon points="1046,676.5 1044.3,674.8 1042.3,673.7 1040.1,673.3 1037.9,673.5 1035.8,674.3 1034.1,675.8 1032.7,677.7 1031.9,680 1031.5,682.6 1031.8,685.1 1032.7,687.5 1034,689.6 1035.7,691.2 1037.8,692.3 1040,692.8 1042.2,692.5 1044.2,691.7 1046,690.2 1047.3,688.3 1048.2,686 1048.5,683.5 1048.2,680.9 1047.4,678.6" fill="url(#h31)"/><polygon points="973.3,636.3 971.3,634.6 968.9,633.5 966.4,633.1 963.9,633.3 961.5,634.1 959.5,635.6 958,637.5 957,639.9 956.7,642.4 957,644.9 958,647.4 959.6,649.5 961.6,651.2 963.9,652.3 966.5,652.7 969,652.5 971.3,651.7 973.4,650.2 974.9,648.2 975.9,645.9 976.2,643.4 975.8,640.8 974.9,638.4" fill="url(#h32)"/><polygon points="995.8,678.9 993.4,679.6 991.4,680.9 989.7,682.7 988.5,685 987.9,687.5 988,690.1 988.6,692.6 989.9,694.9 991.6,696.7 993.7,698 996,698.7 998.5,698.7 1000.8,698.1 1002.8,696.8 1004.5,695 1005.7,692.7 1006.3,690.2 1006.2,687.6 1005.6,685.1 1004.3,682.8 1002.6,681 1000.5,679.7 998.2,679" fill="url(#h33)"/><polygon points="810.2,662.5 808.4,660.7 806.3,659.5 803.9,658.9 801.4,659 798.9,659.7 796.8,661.1 795,663 793.7,665.3 793.1,667.9 793.1,670.5 793.7,673 794.9,675.2 796.7,677 798.9,678.2 801.3,678.8 803.8,678.7 806.2,678 808.4,676.6 810.2,674.7 811.4,672.4 812.1,669.8 812.1,667.2 811.5,664.7" fill="url(#h34)"/><polygon points="889.2,602.2 887.3,600.4 885.1,599.2 882.5,598.6 879.9,598.6 877.4,599.2 875.1,600.5 873.2,602.2 871.9,604.4 871.2,606.8 871.1,609.2 871.8,611.7 873.1,613.8 874.9,615.6 877.2,616.8 879.7,617.5 882.3,617.5 884.9,616.8 887.2,615.6 889,613.8 890.4,611.6 891.1,609.2 891.1,606.8 890.5,604.4" fill="url(#h35)"/><polygon points="808.2,579.1 806.6,577.6 804.6,576.6 802.3,576.2 799.9,576.3 797.5,577.1 795.4,578.4 793.5,580.2 792.2,582.3 791.4,584.6 791.3,586.9 791.7,589.2 792.8,591.1 794.4,592.6 796.4,593.6 798.7,594 801.1,593.9 803.5,593.1 805.7,591.8 807.5,590 808.9,587.9 809.6,585.6 809.8,583.2 809.3,581" fill="url(#h36)"/><polygon points="826.8,609.9 824.3,610.4 822,611.6 820,613.3 818.5,615.4 817.6,617.8 817.3,620.3 817.7,622.7 818.8,624.9 820.3,626.7 822.4,628 824.7,628.7 827.3,628.8 829.8,628.2 832.1,627 834.1,625.3 835.6,623.2 836.5,620.8 836.8,618.3 836.4,615.9 835.3,613.7 833.7,611.9 831.7,610.6 829.3,609.9" fill="url(#h37)"/><polygon points="926.3,738.8 923.8,739.5 921.4,740.8 919.5,742.6 918.1,744.9 917.4,747.4 917.3,750 917.9,752.6 919.2,754.9 921,756.7 923.2,758.1 925.8,758.8 928.4,758.8 931,758.1 933.3,756.8 935.2,755 936.6,752.7 937.3,750.2 937.4,747.6 936.8,745 935.6,742.8 933.7,740.9 931.5,739.6 929,738.8" fill="url(#h38)"/><polygon points="912.2,639.8 909.7,640.5 907.4,641.9 905.6,643.8 904.4,646 903.8,648.6 903.8,651.2 904.6,653.7 906,655.9 908,657.8 910.3,659 912.9,659.6 915.5,659.6 918.1,658.9 920.3,657.5 922.1,655.6 923.4,653.3 924,650.8 923.9,648.2 923.1,645.7 921.7,643.4 919.8,641.6 917.4,640.4 914.8,639.8" fill="url(#h39)"/><polygon points="833.4,700.9 830.9,701.6 828.6,702.9 826.8,704.8 825.5,707.1 824.9,709.6 824.9,712.3 825.6,714.9 826.9,717.2 828.8,719 831,720.4 833.5,721 836.1,721 838.7,720.4 840.9,719 842.7,717.1 844,714.8 844.7,712.3 844.7,709.6 844,707 842.7,704.7 840.8,702.9 838.5,701.5 836,700.9" fill="url(#h40)"/><polygon points="882.5,699.3 881.8,701.9 881.8,704.5 882.5,707.1 883.9,709.4 885.8,711.3 888.1,712.6 890.7,713.3 893.4,713.3 896,712.6 898.3,711.3 900.2,709.4 901.5,707 902.2,704.4 902.2,701.8 901.5,699.2 900.1,696.9 898.2,695 895.9,693.7 893.3,693 890.6,693 888,693.7 885.7,695 883.8,696.9" fill="url(#h41)"/><polygon points="783,839.2 780.9,839.6 779.2,840.6 777.9,842 777.1,843.8 776.9,845.9 777.3,848 778.3,850.1 779.8,852.1 781.7,853.7 783.8,854.9 786.1,855.5 788.3,855.7 790.4,855.3 792.1,854.3 793.4,852.9 794.2,851.1 794.4,849 794,846.9 793.1,844.7 791.6,842.8 789.7,841.2 787.5,840 785.3,839.3" fill="url(#h42)"/><polygon points="762.6,757.3 760.4,757.8 758.6,759 757.1,760.7 756.1,762.9 755.7,765.3 755.9,767.7 756.7,770.2 758,772.4 759.7,774.2 761.7,775.5 764,776.2 766.2,776.3 768.4,775.7 770.3,774.5 771.7,772.8 772.7,770.7 773.1,768.3 772.9,765.8 772.2,763.4 770.9,761.2 769.1,759.4 767.1,758.1 764.8,757.3" fill="url(#h43)"/><polygon points="709,813.8 707.4,814 706.1,814.8 705.1,816.1 704.6,817.8 704.5,819.7 704.9,821.9 705.7,824 707,826 708.5,827.8 710.2,829.1 712,830 713.8,830.4 715.4,830.1 716.8,829.3 717.7,828.1 718.3,826.4 718.4,824.4 718,822.3 717.1,820.1 715.9,818.1 714.4,816.3 712.6,815 710.8,814.1" fill="url(#h44)"/><polygon points="743.2,811.2 743.3,813.4 744,815.7 745.2,817.8 746.8,819.7 748.8,821.2 750.9,822.1 753,822.6 755.1,822.4 756.9,821.6 758.4,820.3 759.4,818.6 759.8,816.6 759.7,814.3 759,812.1 757.8,809.9 756.2,808 754.2,806.5 752.1,805.6 749.9,805.2 747.9,805.3 746,806.1 744.6,807.4 743.6,809.1" fill="url(#h45)"/><polygon points="751.3,666.4 749.1,667.1 747.2,668.4 745.5,670.2 744.3,672.4 743.7,674.9 743.6,677.4 744.1,679.9 745.1,682.1 746.6,683.8 748.5,685.1 750.6,685.7 752.8,685.7 755,685 756.9,683.8 758.6,681.9 759.8,679.7 760.4,677.2 760.5,674.7 760,672.2 759,670 757.5,668.3 755.6,667 753.5,666.4" fill="url(#h46)"/><polygon points="751.3,584.1 749.2,584.8 747.2,586.1 745.4,587.8 744.1,589.9 743.2,592.1 742.8,594.4 743,596.6 743.7,598.5 744.9,600 746.6,601.1 748.5,601.5 750.6,601.4 752.7,600.7 754.8,599.4 756.5,597.7 757.9,595.6 758.8,593.3 759.2,591 759,588.9 758.2,586.9 757,585.4 755.4,584.4 753.4,583.9" fill="url(#h47)"/><polygon points="686.3,628.5 684.7,629.3 683.2,630.6 681.9,632.4 680.9,634.5 680.2,636.8 680,639.1 680.2,641.2 680.8,643.1 681.7,644.6 683,645.6 684.5,646 686.1,645.7 687.8,644.9 689.3,643.6 690.6,641.8 691.6,639.7 692.2,637.5 692.5,635.2 692.3,633 691.7,631.1 690.7,629.6 689.4,628.7 687.9,628.3" fill="url(#h48)"/><polygon points="720.6,630.5 719.7,632.8 719.3,635.2 719.4,637.5 720,639.6 721.1,641.3 722.6,642.6 724.4,643.3 726.4,643.3 728.4,642.8 730.3,641.7 732.1,640 733.4,638 734.4,635.7 734.8,633.3 734.7,630.9 734.1,628.8 733,627.1 731.5,625.8 729.6,625.1 727.6,625.1 725.6,625.6 723.7,626.8 722,628.4" fill="url(#h49)"/><polygon points="649.9,775.9 648.9,776.3 648.1,777.2 647.6,778.6 647.5,780.3 647.6,782.3 648,784.4 648.7,786.5 649.7,788.4 650.8,790 652,791.2 653.2,791.9 654.3,792.1 655.3,791.8 656.1,790.9 656.6,789.5 656.8,787.8 656.6,785.8 656.2,783.7 655.5,781.6 654.5,779.7 653.4,778 652.2,776.8 651,776.1" fill="url(#h50)"/><polygon points="639.2,681.4 638.2,681.8 637.2,682.9 636.4,684.4 635.8,686.2 635.4,688.3 635.2,690.5 635.4,692.6 635.8,694.6 636.4,696.2 637.3,697.4 638.2,698.1 639.3,698.2 640.3,697.7 641.3,696.7 642.1,695.2 642.8,693.3 643.2,691.2 643.3,689 643.2,686.8 642.8,684.9 642.1,683.3 641.3,682.1 640.3,681.4" fill="url(#h51)"/><polygon points="616.6,733.1 616.1,733.5 615.8,734.3 615.5,735.6 615.4,737.2 615.5,739.1 615.7,741.1 616,743 616.4,744.8 617,746.4 617.6,747.5 618.1,748.2 618.7,748.4 619.2,748.1 619.6,747.3 619.8,746 619.9,744.4 619.9,742.5 619.7,740.5 619.3,738.5 618.9,736.7 618.4,735.2 617.8,734 617.2,733.3" fill="url(#h52)"/><polygon points="629.3,734.5 629.2,736.5 629.3,738.5 629.6,740.6 630.2,742.6 630.8,744.3 631.6,745.6 632.5,746.5 633.3,746.8 634.1,746.6 634.8,745.8 635.3,744.6 635.6,742.9 635.7,741 635.6,738.9 635.3,736.8 634.8,734.8 634.1,733.1 633.3,731.8 632.4,731 631.6,730.6 630.8,730.9 630.1,731.6 629.6,732.9" fill="url(#h53)"/><polygon points="726.2,720.7 725.7,723.1 725.7,725.7 726.3,728.1 727.4,730.3 728.9,732.2 730.7,733.5 732.7,734.3 734.8,734.4 736.8,733.8 738.6,732.7 740,731 741.1,728.8 741.6,726.4 741.6,723.9 741,721.5 739.9,719.2 738.5,717.4 736.6,716 734.6,715.3 732.5,715.2 730.5,715.8 728.7,716.9 727.3,718.6" fill="url(#h54)"/><polygon points="663.2,681.5 662.8,683.7 662.6,686 662.9,688.3 663.5,690.3 664.4,692 665.6,693.1 667,693.7 668.4,693.8 669.9,693.2 671.2,692 672.3,690.4 673.1,688.4 673.6,686.1 673.7,683.8 673.4,681.5 672.8,679.5 671.9,677.8 670.7,676.7 669.3,676.1 667.9,676.1 666.5,676.7 665.2,677.8 664.1,679.5" fill="url(#h55)"/><polygon points="675.3,777.1 675.3,779.2 675.7,781.5 676.4,783.7 677.5,785.7 678.9,787.4 680.4,788.6 681.9,789.3 683.5,789.5 684.8,789 686,788 686.8,786.5 687.2,784.7 687.2,782.5 686.8,780.3 686.1,778.1 685,776 683.6,774.4 682.1,773.1 680.5,772.4 679,772.3 677.6,772.7 676.5,773.7 675.7,775.2" fill="url(#h56)"/><polygon points="685.7,736 686.9,737.8 688.4,739 690.1,739.7 691.8,739.8 693.4,739.3 694.8,738.2 696,736.5 696.7,734.5 697.1,732.2 697,729.8 696.4,727.5 695.5,725.4 694.2,723.6 692.7,722.3 691,721.6 689.3,721.6 687.7,722.1 686.3,723.2 685.2,724.9 684.4,726.9 684.1,729.2 684.2,731.6 684.7,733.9" fill="url(#h57)"/><polygon points="778.4,887.7 778.9,889.4 779.8,891.2 781.3,892.9 783.1,894.3 785.1,895.5 787.3,896.2 789.5,896.6 791.4,896.4 793.1,895.8 794.3,894.8 795,893.4 795.1,891.8 794.7,890.1 793.8,888.3 792.3,886.6 790.5,885.1 788.4,884 786.2,883.2 784.1,882.9 782.1,883.1 780.5,883.7 779.3,884.7 778.6,886.1" fill="url(#h58)"/><polygon points="706.7,861.4 707.1,863.2 708,865 709.2,866.8 710.7,868.5 712.4,869.9 714.2,871 715.8,871.6 717.4,871.7 718.6,871.4 719.5,870.6 719.9,869.4 719.9,867.9 719.5,866.1 718.6,864.3 717.4,862.5 715.9,860.8 714.2,859.4 712.5,858.3 710.8,857.7 709.3,857.5 708,857.9 707.1,858.7 706.7,859.9" fill="url(#h59)"/><polygon points="762.3,930.5 763,931.7 764.1,933 765.6,934.2 767.4,935.4 769.3,936.4 771.2,937.1 773,937.6 774.5,937.7 775.8,937.5 776.6,937 776.9,936.2 776.7,935.1 776.1,933.9 774.9,932.7 773.5,931.4 771.7,930.2 769.8,929.2 767.9,928.5 766.1,928 764.5,927.9 763.3,928.1 762.5,928.6 762.2,929.5" fill="url(#h60)"/><polygon points="752.6,903.4 754.6,904.4 756.5,905 758.4,905.2 760,904.9 761.1,904.3 761.9,903.2 762.1,901.9 761.8,900.3 761,898.7 759.8,897 758.1,895.5 756.3,894.2 754.3,893.2 752.3,892.6 750.4,892.4 748.9,892.7 747.7,893.3 746.9,894.4 746.7,895.7 747,897.3 747.8,898.9 749.1,900.6 750.7,902.1" fill="url(#h61)"/><polygon points="650.2,822.4 650.6,824.1 651.3,825.9 652.2,827.8 653.3,829.6 654.4,831.1 655.6,832.3 656.7,833.1 657.7,833.5 658.4,833.3 658.9,832.7 659.1,831.6 659,830.2 658.6,828.5 657.9,826.6 657,824.8 655.9,823 654.7,821.4 653.5,820.2 652.4,819.4 651.5,819.1 650.7,819.2 650.2,819.9 650,821" fill="url(#h62)"/><polygon points="618.3,778.1 618.6,779.7 619.1,781.5 619.7,783.3 620.3,785 620.9,786.6 621.5,787.8 622,788.7 622.4,789.1 622.7,789.1 622.8,788.5 622.7,787.6 622.5,786.2 622.2,784.6 621.7,782.8 621.1,781 620.5,779.3 619.9,777.7 619.3,776.5 618.8,775.6 618.4,775.2 618.1,775.3 618,775.8 618.1,776.8" fill="url(#h63)"/><polygon points="646.3,849.2 647.1,850.4 648,851.9 648.9,853.4 649.9,854.9 650.8,856.3 651.6,857.5 652.2,858.3 652.6,858.8 652.8,858.9 652.7,858.6 652.4,858 651.8,856.9 651.1,855.7 650.2,854.2 649.2,852.7 648.2,851.2 647.3,849.8 646.5,848.6 645.9,847.8 645.5,847.3 645.3,847.2 645.4,847.5 645.8,848.1" fill="url(#h64)"/><polygon points="637.3,824.5 638.1,826.1 638.9,827.4 639.7,828.4 640.3,829 640.7,829.1 640.9,828.7 640.9,828 640.7,826.8 640.3,825.3 639.7,823.6 638.9,821.9 638.1,820.1 637.2,818.5 636.4,817.2 635.7,816.2 635.1,815.6 634.7,815.5 634.4,815.9 634.5,816.7 634.7,817.8 635.1,819.3 635.7,821 636.5,822.7" fill="url(#h65)"/><polygon points="755.7,952.6 756.7,953.3 758.1,954.2 759.6,955.1 761.3,956 762.9,956.8 764.5,957.5 765.8,958.1 766.8,958.4 767.5,958.5 767.7,958.3 767.5,957.9 766.9,957.3 765.9,956.6 764.5,955.7 763,954.8 761.3,953.9 759.7,953.1 758.1,952.4 756.8,951.8 755.7,951.5 755.1,951.4 754.9,951.6 755.1,952" fill="url(#h66)"/><polygon points="684,868.7 685.4,870.1 686.9,871.2 688.3,872 689.4,872.4 690.4,872.2 691,871.7 691.2,870.7 691,869.4 690.5,867.8 689.7,866.1 688.5,864.4 687.2,862.7 685.7,861.3 684.3,860.1 682.9,859.4 681.7,859 680.8,859.2 680.2,859.7 680,860.7 680.1,862 680.7,863.6 681.5,865.3 682.7,867" fill="url(#h67)"/><polygon points="679.6,892.8 680.8,894.1 681.8,895.2 682.8,896 683.4,896.6 683.8,896.8 683.8,896.7 683.6,896.1 683,895.3 682.2,894.2 681.1,893 680,891.6 678.7,890.2 677.5,888.9 676.4,887.8 675.5,886.9 674.9,886.4 674.5,886.2 674.4,886.4 674.7,886.9 675.3,887.7 676.1,888.8 677.2,890 678.3,891.4" fill="url(#h68)"/><polygon points="740.9,935.2 742.6,936.2 744.2,937 745.7,937.5 746.8,937.7 747.7,937.7 748.1,937.3 748,936.7 747.5,935.8 746.6,934.7 745.4,933.5 743.9,932.3 742.2,931.2 740.5,930.2 738.9,929.4 737.4,928.8 736.3,928.6 735.4,928.7 735.1,929 735.1,929.7 735.6,930.6 736.5,931.7 737.7,932.8 739.2,934" fill="url(#h69)"/><polygon points="703.3,905.7 704,905.7 704.4,905.3 704.3,904.6 703.9,903.6 703.1,902.4 702.1,901 700.8,899.5 699.3,898.1 697.9,896.9 696.4,895.8 695.2,895.1 694.2,894.7 693.5,894.7 693.2,895.1 693.2,895.8 693.6,896.8 694.4,898 695.5,899.4 696.8,900.8 698.2,902.2 699.7,903.5 701.1,904.5 702.3,905.3" fill="url(#h70)"/><polygon points="834.1,915.5 836.4,916 838.7,916.1 840.9,915.9 842.7,915.2 844.1,914.1 845,912.8 845.3,911.3 845,909.7 844.1,908.1 842.7,906.7 840.9,905.5 838.7,904.6 836.4,904 834.1,903.9 831.9,904.2 830.1,904.9 828.7,906 827.8,907.3 827.5,908.8 827.8,910.4 828.7,911.9 830.1,913.4 832,914.6" fill="url(#h71)"/><polygon points="817.3,955.9 819.4,956.5 821.4,956.7 823.2,956.7 824.7,956.5 825.8,956 826.4,955.3 826.5,954.4 826.1,953.4 825.1,952.4 823.7,951.4 821.9,950.5 819.9,949.8 817.9,949.3 815.8,949 814,949 812.5,949.3 811.4,949.8 810.8,950.5 810.7,951.3 811.2,952.3 812.1,953.3 813.6,954.3 815.3,955.2" fill="url(#h72)"/><polygon points="904.5,948.1 906.7,948.2 908.9,947.9 911,947.3 912.7,946.5 914,945.5 914.8,944.3 915.1,943.1 914.7,942 913.8,940.9 912.4,940.1 910.6,939.4 908.5,939.1 906.2,939.1 904,939.4 901.9,939.9 900.2,940.8 898.9,941.8 898.1,943 897.8,944.1 898.2,945.3 899.1,946.3 900.5,947.2 902.4,947.8" fill="url(#h73)"/><polygon points="860.3,942.8 861.4,941.8 861.8,940.6 861.7,939.3 861,938 859.8,936.7 858.1,935.7 856.1,934.9 853.8,934.3 851.6,934.1 849.4,934.3 847.6,934.8 846.1,935.6 845,936.6 844.6,937.8 844.7,939.1 845.4,940.4 846.7,941.6 848.3,942.7 850.4,943.5 852.6,944 854.8,944.2 857,944.1 858.8,943.6" fill="url(#h74)"/><polygon points="808.6,975.3 810.4,975.9 812.2,976.3 813.7,976.6 814.9,976.7 815.6,976.7 816,976.6 815.9,976.3 815.3,975.8 814.3,975.3 812.9,974.8 811.3,974.2 809.5,973.6 807.6,973.1 805.9,972.7 804.4,972.4 803.2,972.2 802.4,972.2 802.1,972.4 802.2,972.7 802.8,973.1 803.8,973.6 805.2,974.2 806.8,974.8" fill="url(#h75)"/><polygon points="974.3,960.6 976.3,960.1 978.2,959.4 980,958.5 981.4,957.6 982.4,956.7 982.9,955.8 982.9,955 982.4,954.4 981.4,954 980,953.8 978.3,953.9 976.3,954.2 974.3,954.8 972.4,955.5 970.6,956.3 969.2,957.3 968.2,958.2 967.6,959.1 967.6,959.9 968.2,960.5 969.2,960.9 970.6,961 972.3,960.9" fill="url(#h76)"/><polygon points="959.2,981 961,980.6 962.7,980.2 964.3,979.8 965.7,979.4 966.6,979.1 967.2,978.9 967.3,978.8 967,978.8 966.2,978.9 965,979.1 963.5,979.4 961.8,979.8 960.1,980.2 958.3,980.6 956.7,981 955.4,981.4 954.4,981.7 953.9,981.9 953.8,982 954.1,982 954.9,981.9 956.1,981.7 957.6,981.4" fill="url(#h77)"/><polygon points="1029.3,951.8 1031,950.9 1032.7,950 1034.2,949.1 1035.5,948.2 1036.4,947.4 1037,946.8 1037.1,946.5 1036.8,946.3 1036.1,946.4 1034.9,946.8 1033.6,947.3 1032,948.1 1030.3,948.9 1028.6,949.8 1027.1,950.8 1025.8,951.6 1024.9,952.4 1024.3,953 1024.2,953.3 1024.5,953.5 1025.3,953.4 1026.4,953 1027.8,952.5" fill="url(#h78)"/><polygon points="995.1,965.6 996.2,964.9 996.9,964.3 997.1,963.8 996.9,963.5 996.2,963.5 995,963.6 993.6,963.9 991.9,964.4 990.1,965.1 988.3,965.8 986.6,966.6 985.2,967.3 984.1,968 983.5,968.6 983.2,969.1 983.5,969.3 984.2,969.4 985.3,969.3 986.8,968.9 988.4,968.4 990.2,967.8 992,967.1 993.7,966.3" fill="url(#h79)"/><polygon points="844.3,975.1 845.3,974.8 845.9,974.4 845.9,973.9 845.4,973.2 844.4,972.6 843.1,972 841.3,971.4 839.4,970.9 837.4,970.5 835.5,970.3 833.8,970.3 832.4,970.4 831.4,970.7 830.8,971.1 830.8,971.6 831.3,972.3 832.3,972.9 833.7,973.5 835.4,974.1 837.3,974.6 839.2,975 841.2,975.2 842.9,975.2" fill="url(#h80)"/><polygon points="917.7,986.7 918.7,986.5 919.1,986.4 919.1,986.2 918.6,986.1 917.7,986 916.4,986 914.8,986.1 913,986.2 911.2,986.3 909.4,986.5 907.8,986.6 906.5,986.8 905.6,987 905.1,987.2 905.1,987.3 905.6,987.4 906.6,987.5 907.9,987.5 909.5,987.5 911.2,987.4 913.1,987.3 914.9,987.1 916.4,986.9" fill="url(#h81)"/><polygon points="931.9,965.1 933,964.3 933.5,963.4 933.6,962.6 933,961.8 932,961.2 930.5,960.8 928.7,960.6 926.6,960.6 924.5,960.8 922.5,961.2 920.6,961.8 919.1,962.6 918.1,963.4 917.5,964.2 917.5,965.1 918.1,965.8 919.1,966.4 920.6,966.8 922.4,967.1 924.4,967.1 926.5,966.8 928.6,966.4 930.4,965.8" fill="url(#h82)"/><polygon points="899.1,978.5 898.1,978.1 896.7,977.7 895,977.5 893,977.3 891,977.3 889.1,977.5 887.4,977.7 885.9,978.1 884.9,978.5 884.4,979 884.4,979.4 884.9,979.9 885.9,980.4 887.3,980.7 889,980.9 891,981.1 893,981.1 894.9,981 896.6,980.7 898,980.4 899.1,979.9 899.6,979.5 899.6,979" fill="url(#h83)"/><polygon points="874.6,885.2 875.7,883.6 876.3,881.7 876.2,879.8 875.4,877.9 874.1,876.2 872.3,874.8 870.1,873.8 867.7,873.2 865.2,873.2 862.9,873.7 860.8,874.6 859.1,876 857.9,877.7 857.4,879.5 857.5,881.5 858.2,883.4 859.5,885.1 861.4,886.4 863.5,887.4 866,888 868.4,888 870.8,887.5 872.9,886.6" fill="url(#h84)"/><polygon points="944.9,917.1 946,915.5 946.5,913.9 946.4,912.4 945.7,911 944.5,909.8 942.8,908.9 940.7,908.5 938.4,908.4 936.1,908.8 933.8,909.6 931.9,910.7 930.3,912.1 929.2,913.6 928.7,915.2 928.8,916.7 929.5,918.2 930.8,919.3 932.5,920.2 934.5,920.6 936.8,920.7 939.1,920.3 941.4,919.5 943.3,918.4" fill="url(#h85)"/><polygon points="946.5,842 947.6,839.9 948.1,837.7 947.9,835.5 947.1,833.4 945.7,831.7 943.8,830.4 941.6,829.6 939.1,829.3 936.6,829.7 934.2,830.6 932.1,832.1 930.5,833.9 929.3,836 928.9,838.3 929,840.5 929.9,842.5 931.3,844.3 933.2,845.6 935.4,846.4 937.9,846.6 940.4,846.2 942.8,845.3 944.8,843.9" fill="url(#h86)"/><polygon points="922.6,876.1 921,874.8 918.9,873.8 916.5,873.2 914.1,873.2 911.6,873.7 909.4,874.7 907.6,876 906.2,877.7 905.4,879.6 905.3,881.5 905.8,883.4 906.9,885.1 908.5,886.5 910.6,887.5 912.9,888 915.4,888 917.8,887.5 920,886.6 921.9,885.2 923.2,883.5 924,881.7 924.2,879.7 923.7,877.8" fill="url(#h87)"/><polygon points="1012.8,929.4 1013.8,928 1014.3,926.7 1014.3,925.6 1013.8,924.7 1012.8,924 1011.3,923.8 1009.6,923.8 1007.6,924.3 1005.6,925 1003.7,926 1001.9,927.3 1000.5,928.6 999.5,930 998.9,931.3 998.9,932.4 999.5,933.3 1000.5,934 1001.9,934.2 1003.7,934.1 1005.6,933.7 1007.6,933 1009.6,931.9 1011.3,930.7" fill="url(#h88)"/><polygon points="1066.1,920.9 1067.1,919.7 1067.6,918.7 1067.8,917.9 1067.5,917.4 1066.8,917.3 1065.8,917.5 1064.5,918 1062.9,918.9 1061.3,919.9 1059.7,921.1 1058.2,922.4 1057,923.7 1056,924.9 1055.5,925.9 1055.3,926.7 1055.6,927.2 1056.3,927.3 1057.3,927.1 1058.7,926.5 1060.2,925.7 1061.8,924.7 1063.4,923.4 1064.9,922.1" fill="url(#h89)"/><polygon points="1087.2,870 1087.9,868.3 1088.2,866.7 1088.1,865.4 1087.5,864.5 1086.6,863.9 1085.3,863.9 1083.8,864.3 1082.2,865.2 1080.5,866.4 1079,867.9 1077.6,869.6 1076.5,871.4 1075.8,873.2 1075.5,874.8 1075.6,876.1 1076.2,877 1077.1,877.5 1078.4,877.5 1079.9,877.1 1081.5,876.3 1083.2,875 1084.7,873.5 1086.1,871.8" fill="url(#h90)"/><polygon points="1058.9,905.4 1058.1,905 1057,904.9 1055.6,905.2 1054,905.8 1052.2,906.7 1050.5,908 1048.9,909.3 1047.5,910.8 1046.5,912.2 1045.9,913.5 1045.7,914.6 1046,915.4 1046.7,915.9 1047.8,916 1049.2,915.7 1050.8,915.1 1052.6,914.1 1054.3,912.9 1055.9,911.5 1057.3,910.1 1058.3,908.7 1058.9,907.4 1059.1,906.3" fill="url(#h91)"/><polygon points="1019.1,784.3 1019.7,781.9 1019.7,779.5 1019.1,777.2 1018,775.3 1016.3,773.8 1014.3,772.8 1012.1,772.5 1009.8,772.8 1007.5,773.8 1005.5,775.3 1003.8,777.2 1002.7,779.5 1002,781.9 1002,784.3 1002.6,786.6 1003.8,788.5 1005.4,790 1007.4,790.9 1009.7,791.3 1012,790.9 1014.2,790 1016.3,788.5 1017.9,786.6" fill="url(#h92)"/><polygon points="1091.1,801.4 1091.7,799.1 1091.9,797 1091.6,795.1 1090.8,793.5 1089.7,792.4 1088.3,791.8 1086.6,791.8 1084.9,792.4 1083.1,793.5 1081.5,795.1 1080.2,797 1079.2,799.1 1078.6,801.3 1078.4,803.5 1078.8,805.4 1079.5,807 1080.6,808.1 1082.1,808.7 1083.7,808.6 1085.5,808.1 1087.2,807 1088.8,805.4 1090.1,803.5" fill="url(#h93)"/><polygon points="1077.2,725.1 1077.5,722.6 1077.3,720.2 1076.5,718 1075.4,716.1 1073.9,714.7 1072.1,713.9 1070.1,713.7 1068.2,714.2 1066.4,715.3 1064.8,716.9 1063.6,718.9 1062.9,721.3 1062.6,723.8 1062.8,726.2 1063.5,728.4 1064.7,730.3 1066.2,731.7 1068,732.5 1070,732.6 1071.9,732.2 1073.7,731.1 1075.3,729.5 1076.5,727.4" fill="url(#h94)"/><polygon points="1064.4,763.1 1063,761.6 1061.3,760.6 1059.4,760.3 1057.4,760.6 1055.4,761.5 1053.6,762.9 1052.2,764.9 1051.1,767.1 1050.5,769.5 1050.4,771.9 1050.9,774.1 1051.8,776.1 1053.2,777.6 1054.9,778.5 1056.8,778.8 1058.8,778.6 1060.7,777.6 1062.5,776.2 1064,774.3 1065.1,772.1 1065.6,769.7 1065.7,767.3 1065.3,765" fill="url(#h95)"/><polygon points="995.7,901.8 994.6,900.8 993,900.2 991.1,900 988.9,900.2 986.7,900.9 984.6,901.9 982.7,903.2 981.2,904.7 980.2,906.3 979.7,908 979.7,909.5 980.3,910.8 981.5,911.8 983.1,912.4 985,912.6 987.1,912.4 989.3,911.8 991.4,910.8 993.3,909.4 994.8,907.9 995.9,906.3 996.4,904.7 996.3,903.2" fill="url(#h96)"/><polygon points="1070.8,840.7 1069.7,839.8 1068.3,839.3 1066.6,839.4 1064.7,840 1062.9,841.1 1061.1,842.6 1059.6,844.4 1058.5,846.3 1057.7,848.4 1057.4,850.3 1057.7,852 1058.3,853.3 1059.4,854.3 1060.9,854.7 1062.6,854.6 1064.4,854 1066.3,852.9 1068,851.4 1069.5,849.6 1070.7,847.7 1071.4,845.7 1071.7,843.7 1071.5,842" fill="url(#h97)"/><polygon points="997.5,823.6 996,822.2 994,821.3 991.8,820.9 989.5,821.1 987.1,821.9 985,823.2 983.2,825 981.8,827 981,829.3 980.8,831.5 981.2,833.6 982.2,835.5 983.8,836.9 985.7,837.8 987.9,838.2 990.3,838 992.6,837.2 994.7,835.8 996.5,834.1 997.9,832.1 998.7,829.8 998.9,827.6 998.5,825.5" fill="url(#h98)"/><polygon points="1016.7,856.7 1014.6,857.6 1012.5,858.9 1010.8,860.5 1009.4,862.4 1008.5,864.4 1008.2,866.3 1008.4,868.1 1009.2,869.6 1010.5,870.7 1012.2,871.4 1014.1,871.6 1016.3,871.2 1018.4,870.4 1020.4,869.1 1022.2,867.4 1023.6,865.6 1024.4,863.6 1024.8,861.6 1024.6,859.8 1023.8,858.3 1022.5,857.2 1020.8,856.5 1018.9,856.4" fill="url(#h99)"/><polygon points="828.8,540.9 829.4,538.9 829.5,536.9 828.9,535 827.7,533.5 826,532.3 824,531.6 821.6,531.3 819.2,531.6 816.9,532.5 814.8,533.7 813.1,535.3 811.8,537.2 811.2,539.2 811.1,541.2 811.7,543.1 812.9,544.6 814.5,545.8 816.6,546.6 818.9,546.8 821.3,546.5 823.7,545.6 825.8,544.4 827.5,542.7" fill="url(#h100)"/><polygon points="909.9,564.1 910.5,561.9 910.4,559.7 909.6,557.6 908.3,555.7 906.4,554.2 904.1,553.1 901.7,552.5 899.1,552.5 896.7,553.1 894.5,554.3 892.8,555.8 891.6,557.7 891,559.9 891.1,562.1 891.8,564.2 893.2,566.1 895,567.7 897.3,568.7 899.8,569.3 902.3,569.3 904.8,568.7 906.9,567.6 908.7,566" fill="url(#h101)"/><polygon points="887.8,489.6 888.4,488 888.4,486.5 887.8,485 886.6,483.7 884.9,482.7 882.8,482 880.6,481.6 878.2,481.7 875.9,482.1 873.9,482.9 872.2,484.1 871,485.4 870.4,486.9 870.4,488.5 871,490 872.2,491.3 873.9,492.3 875.9,493.1 878.2,493.4 880.6,493.3 882.9,492.9 884.9,492.1 886.6,490.9" fill="url(#h102)"/><polygon points="872.9,520.4 870.9,519.4 868.6,518.9 866.2,518.8 863.7,519.3 861.5,520.2 859.6,521.6 858.1,523.2 857.3,525.1 857,527.1 857.4,528.9 858.4,530.7 859.9,532.1 861.9,533.1 864.2,533.6 866.7,533.7 869.1,533.2 871.4,532.2 873.3,530.9 874.8,529.2 875.6,527.3 875.9,525.4 875.5,523.5 874.5,521.8" fill="url(#h103)"/><polygon points="994.2,599.7 994.7,597.5 994.6,595.2 993.8,592.8 992.5,590.7 990.7,588.9 988.5,587.6 986.2,586.8 983.7,586.6 981.4,587 979.4,588 977.8,589.5 976.7,591.4 976.2,593.6 976.4,595.9 977.1,598.3 978.4,600.4 980.3,602.2 982.4,603.6 984.8,604.4 987.2,604.6 989.5,604.1 991.5,603.2 993.1,601.6" fill="url(#h104)"/><polygon points="1065.5,641 1066,638.7 1065.9,636.4 1065.2,634 1064.1,631.8 1062.6,629.9 1060.8,628.4 1058.9,627.5 1056.8,627.1 1054.9,627.4 1053.2,628.3 1051.8,629.8 1050.9,631.7 1050.4,633.9 1050.5,636.3 1051.2,638.7 1052.3,640.9 1053.8,642.8 1055.6,644.3 1057.6,645.2 1059.6,645.5 1061.5,645.2 1063.2,644.3 1064.6,642.8" fill="url(#h105)"/><polygon points="1059.6,562.5 1059.7,560.7 1059.3,558.8 1058.4,556.7 1057.1,554.8 1055.5,553.1 1053.6,551.8 1051.6,550.8 1049.7,550.4 1047.9,550.5 1046.5,551.1 1045.4,552.2 1044.7,553.7 1044.6,555.5 1045,557.5 1045.9,559.5 1047.2,561.5 1048.9,563.2 1050.7,564.5 1052.7,565.4 1054.6,565.9 1056.4,565.8 1057.9,565.1 1059,564" fill="url(#h106)"/><polygon points="1040.7,591.2 1039.2,589.2 1037.3,587.7 1035.3,586.6 1033.1,586.1 1031.1,586.1 1029.2,586.8 1027.7,588 1026.7,589.7 1026.1,591.7 1026.1,594 1026.7,596.3 1027.8,598.5 1029.3,600.5 1031.2,602 1033.3,603.1 1035.4,603.6 1037.5,603.6 1039.3,602.9 1040.8,601.6 1041.8,600 1042.4,597.9 1042.3,595.7 1041.8,593.4" fill="url(#h107)"/><polygon points="950.2,457.4 950.3,456.3 949.9,455.2 949,454.1 947.6,453.1 945.8,452.2 943.8,451.5 941.6,451.1 939.5,451 937.5,451.1 935.9,451.6 934.6,452.2 933.9,453.1 933.7,454.2 934.1,455.3 935.1,456.4 936.5,457.4 938.3,458.3 940.3,459 942.5,459.4 944.6,459.5 946.6,459.4 948.2,458.9 949.4,458.2" fill="url(#h108)"/><polygon points="1037.4,495.4 1037.5,494.3 1037.1,492.9 1036.2,491.5 1034.9,490 1033.3,488.6 1031.5,487.4 1029.5,486.4 1027.7,485.8 1025.9,485.6 1024.5,485.7 1023.4,486.2 1022.8,487.1 1022.7,488.2 1023.1,489.5 1024,491 1025.3,492.5 1026.9,493.9 1028.7,495.1 1030.7,496.1 1032.6,496.7 1034.3,496.9 1035.7,496.8 1036.8,496.3" fill="url(#h109)"/><polygon points="1003.9,450.1 1003.9,449.5 1003.3,448.7 1002.4,447.9 1001,447 999.4,446.1 997.5,445.3 995.7,444.6 993.9,444.1 992.3,443.8 991,443.7 990.1,443.8 989.6,444.2 989.7,444.8 990.2,445.6 991.2,446.4 992.5,447.3 994.2,448.2 996,449 997.9,449.7 999.7,450.2 1001.3,450.5 1002.6,450.6 1003.5,450.4" fill="url(#h110)"/><polygon points="996.3,460.3 994.7,459.2 992.9,458.3 990.9,457.5 988.9,457 987.1,456.7 985.6,456.8 984.4,457.1 983.7,457.6 983.5,458.4 983.8,459.4 984.6,460.5 985.9,461.6 987.5,462.6 989.4,463.6 991.4,464.3 993.3,464.8 995.2,465.1 996.7,465.1 997.9,464.8 998.5,464.2 998.7,463.4 998.4,462.4 997.6,461.4" fill="url(#h111)"/><polygon points="959.7,550.9 957.9,549.3 955.7,548 953.3,547.3 950.8,547.1 948.5,547.4 946.4,548.3 944.8,549.7 943.6,551.5 943.1,553.5 943.2,555.6 943.9,557.7 945.3,559.7 947.1,561.3 949.3,562.6 951.7,563.3 954.1,563.5 956.5,563.1 958.6,562.2 960.2,560.9 961.3,559.1 961.9,557.1 961.8,554.9 961,552.8" fill="url(#h112)"/><polygon points="1025.3,516.1 1023.6,514.5 1021.6,513.3 1019.5,512.4 1017.5,511.9 1015.6,511.9 1014,512.3 1012.7,513.2 1012,514.4 1011.8,516 1012.2,517.7 1013,519.4 1014.4,521.2 1016.1,522.7 1018,524 1020.1,524.9 1022.2,525.3 1024.1,525.4 1025.7,524.9 1026.9,524 1027.6,522.8 1027.8,521.3 1027.5,519.6 1026.6,517.8" fill="url(#h113)"/><polygon points="936.4,478.7 934.6,477.6 932.5,476.9 930.2,476.4 927.9,476.4 925.8,476.7 923.9,477.4 922.5,478.4 921.6,479.6 921.3,481 921.6,482.5 922.5,483.9 923.9,485.2 925.8,486.3 927.9,487.1 930.2,487.5 932.5,487.6 934.6,487.3 936.4,486.6 937.9,485.6 938.7,484.3 939,482.9 938.7,481.5 937.8,480" fill="url(#h114)"/><polygon points="966.8,508.2 964.6,508.4 962.8,509.1 961.3,510.2 960.4,511.6 960.1,513.3 960.3,515 961.2,516.8 962.5,518.5 964.4,519.9 966.5,521.1 968.8,521.8 971.1,522 973.2,521.8 975.1,521.1 976.5,520 977.5,518.6 977.8,516.9 977.5,515.1 976.7,513.3 975.3,511.7 973.5,510.2 971.4,509.1 969.1,508.4" fill="url(#h115)"/><polygon points="610.2,695.7 610.1,694.4 609.8,693.5 609.6,693 609.3,693 609,693.5 608.8,694.5 608.5,695.9 608.4,697.5 608.2,699.4 608.2,701.3 608.2,703.1 608.3,704.8 608.4,706.1 608.6,707 608.9,707.5 609.2,707.5 609.4,707 609.7,706 609.9,704.6 610.1,703 610.3,701.1 610.3,699.2 610.3,697.4" fill="url(#h116)"/><polygon points="633.6,643.5 633.3,642.1 632.8,641.1 632.2,640.6 631.4,640.7 630.6,641.3 629.7,642.4 628.9,643.9 628.2,645.7 627.6,647.7 627.3,649.7 627.1,651.7 627.1,653.4 627.4,654.8 627.9,655.8 628.5,656.3 629.3,656.2 630.1,655.6 631,654.6 631.8,653.1 632.5,651.3 633.1,649.3 633.4,647.2 633.6,645.2" fill="url(#h117)"/><polygon points="619.5,619.8 619.8,618.7 619.9,618 620,617.7 619.8,617.8 619.6,618.4 619.2,619.4 618.7,620.8 618.2,622.3 617.7,624 617.2,625.8 616.7,627.4 616.3,628.8 616.1,630 615.9,630.7 615.9,631 616,630.9 616.3,630.3 616.7,629.3 617.1,627.9 617.6,626.4 618.2,624.6 618.7,622.9 619.1,621.3" fill="url(#h118)"/><polygon points="615.8,650 615.3,650.8 614.9,652.1 614.5,653.7 614.1,655.5 613.8,657.4 613.6,659.3 613.5,661 613.5,662.4 613.6,663.5 613.8,664.1 614.2,664.2 614.5,663.9 615,663 615.4,661.8 615.9,660.2 616.2,658.4 616.5,656.5 616.8,654.6 616.9,652.9 616.8,651.4 616.7,650.3 616.5,649.7 616.2,649.6" fill="url(#h119)"/><polygon points="682.2,590.8 681.8,589.3 681,588.3 680,587.7 678.7,587.8 677.2,588.3 675.8,589.4 674.4,590.8 673.2,592.6 672.2,594.7 671.5,596.7 671.1,598.7 671.2,600.5 671.6,602 672.3,603.1 673.4,603.6 674.7,603.6 676.1,603 677.5,602 678.9,600.5 680.2,598.7 681.2,596.7 681.9,594.6 682.2,592.6" fill="url(#h120)"/><polygon points="748.2,547.5 747.6,546 746.6,544.9 745.2,544.2 743.4,544.1 741.5,544.5 739.5,545.4 737.6,546.7 735.9,548.3 734.6,550.2 733.6,552.2 733.2,554.2 733.2,556 733.8,557.5 734.9,558.6 736.3,559.3 738,559.4 740,559 742,558.2 743.9,556.8 745.5,555.2 746.9,553.3 747.8,551.3 748.3,549.3" fill="url(#h121)"/><polygon points="718.9,510.9 718.8,509.8 718.3,509.1 717.4,508.9 716.1,509 714.7,509.5 713.1,510.5 711.4,511.7 709.8,513.2 708.5,514.7 707.4,516.3 706.7,517.9 706.3,519.2 706.4,520.2 706.9,520.9 707.8,521.2 709.1,521.1 710.6,520.6 712.2,519.6 713.8,518.4 715.4,516.9 716.8,515.3 717.9,513.7 718.6,512.2" fill="url(#h122)"/><polygon points="710.4,544.4 708.8,544.7 707,545.5 705.3,546.8 703.7,548.3 702.3,550.1 701.3,552 700.6,553.9 700.4,555.7 700.7,557.2 701.4,558.3 702.4,559 703.9,559.2 705.5,558.8 707.2,558 709,556.8 710.6,555.2 712,553.4 713,551.5 713.7,549.6 713.9,547.8 713.6,546.3 712.9,545.2 711.8,544.6" fill="url(#h123)"/><polygon points="703.5,492.3 704,491.6 704.1,491.2 703.8,491.1 703.2,491.3 702.3,491.9 701.1,492.8 699.8,493.9 698.5,495.1 697.1,496.4 695.9,497.7 694.8,498.9 694,499.9 693.6,500.6 693.5,501 693.8,501.1 694.4,500.9 695.3,500.3 696.4,499.4 697.7,498.3 699.1,497.1 700.5,495.8 701.7,494.5 702.7,493.3" fill="url(#h124)"/><polygon points="651.8,594.7 650.8,595.2 649.7,596.3 648.6,597.7 647.5,599.4 646.7,601.4 646,603.3 645.6,605.2 645.4,606.9 645.6,608.3 646,609.2 646.7,609.7 647.6,609.7 648.6,609.1 649.7,608.1 650.8,606.6 651.8,604.9 652.7,603 653.4,601 653.8,599.1 654,597.4 653.8,596 653.4,595.1 652.7,594.6" fill="url(#h125)"/><polygon points="689.4,516.5 688.3,517.1 687,518 685.7,519.2 684.3,520.7 683,522.2 681.9,523.8 681,525.2 680.5,526.5 680.3,527.4 680.5,528 681,528.3 681.8,528.1 682.9,527.5 684.1,526.5 685.5,525.3 686.9,523.9 688.2,522.3 689.3,520.8 690.1,519.3 690.7,518.1 690.9,517.1 690.7,516.5 690.2,516.3" fill="url(#h126)"/><polygon points="639.3,573.2 638.8,574 638.2,575.1 637.4,576.5 636.6,578 635.8,579.7 635,581.3 634.4,582.8 633.9,584 633.6,584.9 633.5,585.5 633.6,585.6 633.9,585.2 634.4,584.5 635,583.4 635.8,582 636.6,580.4 637.4,578.8 638.2,577.1 638.8,575.7 639.3,574.4 639.7,573.5 639.8,573 639.6,572.9" fill="url(#h127)"/><polygon points="652.1,563.7 651.1,565.4 650.2,567.1 649.6,568.8 649.2,570.2 649,571.3 649.2,571.9 649.6,572.2 650.2,572 651.1,571.4 652.1,570.3 653.2,568.9 654.3,567.3 655.3,565.6 656.1,563.9 656.8,562.2 657.2,560.8 657.3,559.7 657.2,559.1 656.8,558.8 656.1,559 655.2,559.7 654.2,560.7 653.2,562.1" fill="url(#h128)"/><polygon points="1108.5,709.4 1109.8,708.1 1110.8,706.4 1111.6,704.3 1111.9,702.1 1111.9,699.7 1111.5,697.4 1110.7,695.4 1109.5,693.8 1108.2,692.7 1106.7,692.1 1105.2,692.2 1103.7,692.9 1102.4,694.1 1101.3,695.8 1100.6,697.9 1100.3,700.2 1100.3,702.6 1100.7,704.8 1101.5,706.9 1102.7,708.5 1104,709.6 1105.5,710.1 1107,710.1" fill="url(#h129)"/><polygon points="1121.6,784.7 1122.9,783.5 1124,781.8 1125,779.8 1125.7,777.7 1126.1,775.5 1126.1,773.5 1125.8,771.7 1125.2,770.3 1124.3,769.4 1123.2,769 1121.9,769.2 1120.6,770 1119.3,771.2 1118.1,772.9 1117.1,774.9 1116.4,777.1 1116.1,779.2 1116,781.3 1116.3,783 1117,784.4 1117.9,785.3 1119,785.7 1120.3,785.5" fill="url(#h130)"/><polygon points="1153.5,702 1154.2,700.9 1154.8,699.3 1155.1,697.4 1155.2,695.3 1155.1,693.1 1154.8,691.1 1154.3,689.3 1153.7,687.9 1152.9,686.9 1152,686.5 1151.2,686.6 1150.4,687.3 1149.7,688.4 1149.1,690 1148.8,692 1148.6,694.1 1148.7,696.2 1149,698.2 1149.5,700 1150.2,701.5 1151,702.4 1151.9,702.8 1152.7,702.7" fill="url(#h131)"/><polygon points="1135,724 1134.8,721.8 1134.4,719.8 1133.6,718.1 1132.6,716.8 1131.4,716.1 1130.2,716 1128.9,716.5 1127.7,717.5 1126.7,719 1125.9,721 1125.4,723.1 1125.2,725.4 1125.3,727.6 1125.8,729.6 1126.6,731.3 1127.6,732.6 1128.7,733.3 1130,733.4 1131.3,732.9 1132.5,731.9 1133.5,730.3 1134.3,728.4 1134.8,726.3" fill="url(#h132)"/><polygon points="1116,853.3 1117.3,852.1 1118.5,850.6 1119.7,848.8 1120.7,847 1121.4,845.2 1121.9,843.6 1122,842.2 1121.8,841.2 1121.3,840.7 1120.6,840.5 1119.5,840.9 1118.4,841.7 1117.1,842.9 1115.8,844.4 1114.7,846.2 1113.7,848 1112.9,849.8 1112.5,851.4 1112.3,852.8 1112.5,853.8 1113,854.4 1113.8,854.5 1114.8,854.1" fill="url(#h133)"/><polygon points="1093.5,903.2 1094.7,902.1 1096,900.8 1097.3,899.4 1098.5,898 1099.6,896.7 1100.4,895.5 1100.8,894.6 1101,894.1 1100.8,893.9 1100.3,894 1099.5,894.5 1098.5,895.4 1097.3,896.5 1095.9,897.8 1094.6,899.2 1093.4,900.6 1092.4,901.9 1091.6,903.1 1091.1,903.9 1091,904.5 1091.2,904.7 1091.7,904.5 1092.5,904" fill="url(#h134)"/><polygon points="1141,843.4 1141.7,842.1 1142.5,840.6 1143.4,839 1144.2,837.4 1145,835.9 1145.6,834.6 1146,833.7 1146.2,833.1 1146.2,832.9 1146,833.1 1145.6,833.7 1145,834.7 1144.3,836 1143.5,837.5 1142.6,839.1 1141.8,840.7 1141.1,842.2 1140.5,843.5 1140,844.4 1139.8,845 1139.8,845.2 1140,845 1140.4,844.4" fill="url(#h135)"/><polygon points="1124.2,863.5 1125.2,862 1125.9,860.6 1126.4,859.4 1126.6,858.6 1126.5,858.2 1126.1,858.2 1125.4,858.6 1124.5,859.4 1123.4,860.5 1122.3,861.8 1121.1,863.4 1120,864.9 1119.1,866.5 1118.3,867.9 1117.8,869 1117.7,869.8 1117.8,870.2 1118.2,870.2 1118.8,869.8 1119.7,869.1 1120.8,868 1122,866.6 1123.1,865.1" fill="url(#h136)"/><polygon points="1175.9,696.9 1176,695.6 1176.1,694.1 1176.1,692.3 1176.1,690.4 1176,688.5 1175.8,686.8 1175.6,685.4 1175.3,684.4 1175.1,683.8 1174.8,683.6 1174.6,684 1174.4,684.8 1174.3,686.1 1174.2,687.7 1174.2,689.5 1174.2,691.4 1174.3,693.2 1174.5,694.9 1174.7,696.3 1175,697.4 1175.2,698 1175.5,698.1 1175.7,697.7" fill="url(#h137)"/><polygon points="1139.1,800.8 1139.7,798.9 1139.9,797 1139.9,795.5 1139.6,794.3 1139.1,793.5 1138.3,793.3 1137.3,793.6 1136.3,794.3 1135.2,795.6 1134.2,797.2 1133.2,799 1132.5,801 1131.9,803 1131.7,804.8 1131.7,806.4 1132,807.6 1132.5,808.3 1133.3,808.6 1134.3,808.3 1135.3,807.5 1136.4,806.3 1137.5,804.7 1138.4,802.8" fill="url(#h138)"/><polygon points="1162.2,792.8 1162.7,791.1 1163.1,789.6 1163.4,788.4 1163.6,787.5 1163.6,787.1 1163.4,787.1 1163.1,787.6 1162.7,788.5 1162.1,789.8 1161.6,791.3 1161,793 1160.4,794.8 1159.9,796.4 1159.4,797.9 1159.1,799.2 1159,800 1159,800.4 1159.2,800.4 1159.5,799.9 1159.9,799 1160.4,797.7 1161,796.2 1161.6,794.5" fill="url(#h139)"/><polygon points="1168.3,718.4 1168.3,716.4 1168.1,714.6 1167.9,713.1 1167.5,711.9 1167.1,711.2 1166.5,711.1 1166,711.4 1165.5,712.3 1165,713.6 1164.6,715.3 1164.3,717.2 1164.1,719.2 1164.1,721.2 1164.2,723 1164.5,724.5 1164.9,725.7 1165.3,726.3 1165.9,726.5 1166.4,726.1 1166.9,725.2 1167.4,723.9 1167.8,722.3 1168.1,720.4" fill="url(#h140)"/><polygon points="1161.5,765.7 1161.2,765 1160.7,764.9 1160.1,765.3 1159.4,766.2 1158.7,767.5 1158.1,769.1 1157.5,770.9 1157,772.9 1156.6,774.8 1156.4,776.5 1156.4,778 1156.6,779 1156.9,779.6 1157.4,779.8 1158,779.4 1158.6,778.5 1159.3,777.2 1160,775.6 1160.6,773.7 1161.1,771.8 1161.5,769.9 1161.6,768.2 1161.7,766.7" fill="url(#h141)"/>
<polygon points="888,453.9 887.9,103.1 892,103.1 892,453.9" fill="#b85a5a"/><polygon points="892,453.9 892,103.1 896.1,103.1 896,453.9" fill="#24502a"/><polygon points="1109.5,825.5 1710.5,1171.7 1708.9,1174.4 1108,828" fill="#58c048"/><polygon points="1108,828 1708.9,1174.4 1707.3,1177.3 1106.4,830.8" fill="#5a48b8"/><polygon points="674.4,825.3 87.8,1163.2 89.5,1166.1 676,828" fill="#d85858"/><polygon points="676,828 89.5,1166.1 91.4,1169.4 677.8,831.1" fill="#202a68"/>
<g fill="none" stroke="#000" stroke-linecap="round" stroke-linejoin="round"><path d="M867.9 371.7 L867.8 361.7 L876.3 363 L875.9 363 L875.9 361.6 L876.5 360 L877.4 358.4 L878.7 356.8 L880.3 355.5 L882 354.3 L883.7 353.6 L885.4 353.2 L886.9 353.2 L888.1 353.7 L888.9 354.5 L889.3 355.7 L889.2 357.1 L888.7 358.7 L887.7 360.3 L886.4 361.8 L884.9 363.2 M878.3 338.3 L875.9 339.6 L873.6 341.2 L871.5 342.9 L869.8 344.8 L868.6 346.5 L867.9 348.2 L867.8 349.6 L868.2 350.8 L869.2 351.6 L870.6 352 L872.5 352 L874.7 351.6 L877.1 350.7 L879.6 349.6 L881.9 348.1 L884.1 346.5 L886 344.7 L887.4 342.9 L888.4 341.2 L888.8 339.6 L888.7 338.3 L888 337.3 L886.8 336.7 L885.1 336.5 L883 336.7 L880.7 337.3 L878.3 338.3 M878.3 344.5 L878.3 344" stroke-width="2.00"/><path d="M888.8 218.6 L867.1 228.2 L882.3 230.8 L882.3 218.3 M877.9 202 L875.4 203.3 L873 204.9 L870.9 206.6 L869.2 208.4 L867.9 210.2 L867.2 212 L867 213.5 L867.5 214.7 L868.5 215.6 L870 216.2 L872 216.2 L874.2 215.9 L876.7 215.2 L879.2 214 L881.6 212.6 L883.9 211 L885.8 209.2 L887.3 207.4 L888.3 205.6 L888.7 204 L888.6 202.6 L887.9 201.5 L886.6 200.8 L884.9 200.5 L882.8 200.6 L880.4 201.1 L877.9 202 M877.9 208.6 L877.9 208.1" stroke-width="2.12"/><path d="M866.3 82.5 L866.4 91.8 L875.8 89.1 L877.2 88.4 L875.6 87.8 L874.4 86.7 L874 85.1 L874.2 83.2 L875.1 81.2 L876.6 79.2 L878.5 77.5 L880.7 76.1 L883 75.3 L885.2 75 L887 75.4 L888.3 76.3 L889 77.7 L889 79.5 L888.4 81.5 L887.1 83.5 L885.3 85.3 M877.5 57.4 L874.9 58.6 L872.4 60.1 L870.2 61.8 L868.4 63.7 L867.1 65.5 L866.4 67.3 L866.3 68.9 L866.7 70.3 L867.8 71.3 L869.3 71.9 L871.3 72.1 L873.7 71.9 L876.2 71.2 L878.8 70.2 L881.3 68.8 L883.6 67.2 L885.6 65.4 L887.2 63.6 L888.2 61.7 L888.6 60 L888.5 58.5 L887.7 57.3 L886.4 56.5 L884.7 56.1 L882.5 56.1 L880.1 56.5 L877.5 57.4 M877.5 64.3 L877.5 63.8" stroke-width="2.26"/><path d="M866 -69.8 L872.9 -65.2 L878.6 -63.5 L876.8 -63.6 L875.3 -64.2 L874.2 -65.3 L873.7 -66.8 L873.7 -68.6 L874.3 -70.4 L875.4 -72.3 L876.9 -74 L878.7 -75.5 L880.8 -76.6 L882.8 -77.2 L884.8 -77.3 L886.4 -76.9 L887.7 -76 L888.5 -74.7 L888.8 -73.1 L888.5 -71.2 L887.7 -69.4 L886.4 -67.6 L884.7 -66 L882.7 -64.7 L880.7 -63.8 L878.6 -63.5 M877 -96.5 L874.3 -95.4 L871.8 -93.9 L869.5 -92.2 L867.7 -90.3 L866.4 -88.4 L865.6 -86.5 L865.4 -84.8 L865.9 -83.4 L867 -82.2 L868.6 -81.5 L870.7 -81.1 L873.1 -81.3 L875.7 -81.8 L878.4 -82.8 L881 -84.1 L883.4 -85.7 L885.4 -87.5 L887 -89.4 L888.1 -91.3 L888.5 -93.1 L888.4 -94.6 L887.6 -96 L886.3 -96.9 L884.4 -97.5 L882.2 -97.6 L879.7 -97.3 L877 -96.5 M877 -89.1 L877 -89.7" stroke-width="2.40"/><path d="M1216.2 862.8 L1224.8 867.8 L1212.7 870.3 L1213.1 870.2 L1214.3 870.9 L1214.9 871.9 L1215.1 873 L1214.7 874.3 L1213.9 875.6 L1212.6 876.8 L1210.9 877.8 L1209.1 878.7 L1207.1 879.2 L1205.1 879.5 L1203.3 879.4 L1201.8 878.9 L1200.7 878.2 L1200 877.2 L1199.8 876 L1200.2 874.8 L1201.1 873.5 M1231.2 883.3 L1233.3 881.8 L1234.9 880.1 L1236.1 878.4 L1236.7 876.9 L1236.8 875.6 L1236.3 874.5 L1235.2 873.7 L1233.7 873.3 L1231.7 873.3 L1229.4 873.6 L1227 874.4 L1224.5 875.4 L1222.1 876.7 L1219.9 878.2 L1218 879.9 L1216.6 881.5 L1215.6 883.1 L1215.3 884.6 L1215.5 885.8 L1216.3 886.8 L1217.6 887.4 L1219.4 887.6 L1221.5 887.4 L1223.9 886.9 L1226.4 886 L1228.9 884.8 L1231.2 883.3 M1225.9 880.3 L1226.3 880.5" stroke-width="2.00"/><path d="M1321.2 947.2 L1340.1 933.4 L1318.8 938.4 L1329.6 944.6 M1349.1 950.8 L1351.2 949.2 L1352.8 947.4 L1353.9 945.7 L1354.5 944 L1354.5 942.6 L1353.9 941.5 L1352.7 940.6 L1351.1 940.2 L1349.1 940.2 L1346.8 940.6 L1344.3 941.3 L1341.8 942.4 L1339.4 943.8 L1337.2 945.4 L1335.3 947.2 L1333.9 948.9 L1333.1 950.6 L1332.8 952.2 L1333.1 953.5 L1333.9 954.5 L1335.3 955.1 L1337.2 955.3 L1339.4 955.2 L1341.8 954.6 L1344.3 953.6 L1346.8 952.4 L1349.1 950.8 M1343.5 947.6 L1343.9 947.8" stroke-width="2.12"/><path d="M1465.7 1005 L1457.7 1000.4 L1449 1006 L1447.9 1007 L1450.3 1006.5 L1452.6 1006.6 L1454.5 1007.2 L1455.9 1008.2 L1456.6 1009.6 L1456.5 1011.3 L1455.7 1013 L1454.3 1014.7 L1452.3 1016.2 L1450 1017.3 L1447.5 1017.9 L1445.1 1018.1 L1443 1017.7 L1441.4 1016.8 L1440.5 1015.5 L1440.3 1013.9 L1440.8 1012.2 M1474.3 1022.5 L1476.3 1020.7 L1477.8 1018.8 L1478.9 1017 L1479.4 1015.3 L1479.3 1013.7 L1478.7 1012.5 L1477.4 1011.7 L1475.7 1011.2 L1473.7 1011.2 L1471.3 1011.6 L1468.8 1012.4 L1466.2 1013.6 L1463.8 1015 L1461.7 1016.7 L1459.9 1018.6 L1458.5 1020.5 L1457.7 1022.3 L1457.5 1023.9 L1457.9 1025.3 L1458.8 1026.4 L1460.3 1027 L1462.2 1027.3 L1464.4 1027.1 L1466.9 1026.5 L1469.5 1025.5 L1472 1024.1 L1474.3 1022.5 M1468.3 1019 L1468.7 1019.3" stroke-width="2.26"/><path d="M1596.6 1080 L1585 1081.2 L1577.1 1083.1 L1579.2 1082.3 L1581.5 1081.8 L1583.6 1081.9 L1585.5 1082.3 L1587 1083.2 L1587.9 1084.4 L1588.4 1085.9 L1588.1 1087.5 L1587.4 1089.1 L1586 1090.6 L1584.2 1092 L1582.2 1093 L1579.9 1093.6 L1577.7 1093.9 L1575.7 1093.6 L1574 1092.9 L1572.8 1091.9 L1572.1 1090.5 L1572 1089 L1572.5 1087.3 L1573.6 1085.7 L1575.1 1084.3 L1577.1 1083.1 M1607.4 1098.7 L1609.3 1096.8 L1610.8 1094.8 L1611.8 1092.8 L1612.2 1091 L1612.1 1089.4 L1611.3 1088.1 L1610 1087.1 L1608.2 1086.7 L1606.1 1086.6 L1603.7 1087.1 L1601.1 1087.9 L1598.6 1089.2 L1596.2 1090.7 L1594 1092.6 L1592.3 1094.5 L1591 1096.5 L1590.3 1098.4 L1590.1 1100.2 L1590.6 1101.7 L1591.6 1102.8 L1593.2 1103.5 L1595.2 1103.8 L1597.5 1103.6 L1600 1102.9 L1602.6 1101.8 L1605.1 1100.4 L1607.4 1098.7 M1601 1095 L1601.4 1095.3" stroke-width="2.40"/><path d="M1726.9 1153.7 L1738.6 1160.3 L1712 1172.1 M1749.2 1179.9 L1751.1 1177.8 L1752.5 1175.7 L1753.4 1173.6 L1753.7 1171.6 L1753.5 1169.9 L1752.6 1168.5 L1751.2 1167.6 L1749.3 1167 L1747.1 1167 L1744.6 1167.5 L1742.1 1168.4 L1739.5 1169.7 L1737.1 1171.4 L1735 1173.3 L1733.3 1175.4 L1732.1 1177.5 L1731.5 1179.6 L1731.4 1181.5 L1732 1183 L1733.1 1184.2 L1734.8 1185 L1736.9 1185.3 L1739.2 1185.1 L1741.8 1184.4 L1744.4 1183.2 L1746.9 1181.7 L1749.2 1179.9 M1742.3 1175.9 L1742.8 1176.2" stroke-width="2.56"/><path d="M1882.9 1249.2 L1883.8 1248.1 L1884.3 1247 L1884.5 1245.8 L1884.3 1244.6 L1883.8 1243.6 L1883 1242.7 L1881.9 1241.9 L1880.5 1241.5 L1879.1 1241.2 L1877.6 1241.3 L1876.1 1241.6 L1874.7 1242.2 L1873.4 1243 L1872.5 1244 L1871.8 1245.1 L1871.4 1246.3 L1871.4 1247.4 L1871.7 1248.6 L1872.4 1249.6 L1873.4 1250.4 L1874.6 1251 L1876 1251.4 L1877.5 1251.4 L1879 1251.2 L1880.5 1250.8 L1881.8 1250.1 L1882.9 1249.2 M1875.5 1258.6 L1876.5 1257.4 L1877.1 1256 L1877.2 1254.6 L1877 1253.2 L1876.3 1251.9 L1875.2 1250.7 L1873.8 1249.8 L1872.2 1249.2 L1870.4 1248.9 L1868.5 1248.9 L1866.7 1249.3 L1865 1249.9 L1863.6 1250.9 L1862.4 1252 L1861.6 1253.3 L1861.3 1254.7 L1861.3 1256.2 L1861.8 1257.5 L1862.6 1258.7 L1863.9 1259.8 L1865.4 1260.5 L1867.1 1261 L1869 1261.2 L1870.8 1261 L1872.6 1260.5 L1874.2 1259.7 L1875.5 1258.6 M1900.5 1266.5 L1902.4 1264.3 L1903.7 1262.1 L1904.6 1259.8 L1904.8 1257.7 L1904.4 1255.9 L1903.4 1254.4 L1901.9 1253.4 L1899.9 1252.8 L1897.6 1252.8 L1895.1 1253.3 L1892.5 1254.2 L1889.9 1255.7 L1887.6 1257.5 L1885.5 1259.5 L1883.9 1261.8 L1882.8 1264 L1882.2 1266.2 L1882.3 1268.2 L1883 1269.9 L1884.2 1271.2 L1886 1272 L1888.1 1272.3 L1890.6 1272.1 L1893.2 1271.3 L1895.8 1270.1 L1898.3 1268.5 L1900.5 1266.5 M1893.2 1262.3 L1893.8 1262.6" stroke-width="2.74"/><path d="M2043.2 1343 L2044.2 1341.5 L2044.9 1339.8 L2045.1 1338.2 L2044.9 1336.6 L2044.1 1335.1 L2043 1333.8 L2041.5 1332.9 L2039.8 1332.3 L2037.9 1332 L2035.9 1332.1 L2033.9 1332.6 L2032 1333.5 L2030.4 1334.6 L2029.2 1336 L2028.3 1337.6 L2027.8 1339.3 L2027.8 1340.9 L2028.3 1342.5 L2029.2 1343.8 L2030.6 1345 L2032.2 1345.8 L2034 1346.2 L2036 1346.3 L2038.1 1346 L2040 1345.3 L2041.7 1344.3 L2043.2 1343 M2043.2 1343 L2021 1349.9 M2062.5 1359.2 L2064.3 1356.9 L2065.5 1354.5 L2066.2 1352.1 L2066.3 1349.8 L2065.8 1347.9 L2064.7 1346.3 L2063.1 1345.2 L2061 1344.6 L2058.6 1344.5 L2056.1 1345 L2053.4 1346.1 L2050.9 1347.6 L2048.5 1349.5 L2046.5 1351.8 L2045 1354.1 L2044 1356.6 L2043.6 1358.9 L2043.8 1361.1 L2044.6 1362.9 L2045.9 1364.3 L2047.8 1365.1 L2050.1 1365.5 L2052.6 1365.2 L2055.2 1364.4 L2057.9 1363.1 L2060.3 1361.3 L2062.5 1359.2 M2054.7 1354.7 L2055.3 1355.1" stroke-width="2.93"/><path d="M2195.2 1426.3 L2204.1 1425.4 L2187.4 1445.7 M2222.9 1451.1 L2224.6 1448.6 L2225.8 1446 L2226.4 1443.4 L2226.3 1441 L2225.7 1438.9 L2224.4 1437.2 L2222.7 1436 L2220.5 1435.4 L2218.1 1435.4 L2215.4 1435.9 L2212.8 1437 L2210.2 1438.7 L2207.9 1440.7 L2206 1443.1 L2204.5 1445.6 L2203.6 1448.2 L2203.3 1450.8 L2203.7 1453 L2204.6 1455 L2206.1 1456.4 L2208.1 1457.4 L2210.4 1457.7 L2213 1457.5 L2215.7 1456.6 L2218.4 1455.2 L2220.8 1453.3 L2222.9 1451.1 M2214.6 1446.3 L2215.2 1446.7 M2246.3 1464.5 L2248 1462 L2249.2 1459.3 L2249.7 1456.7 L2249.6 1454.3 L2249 1452.2 L2247.7 1450.5 L2245.9 1449.3 L2243.8 1448.6 L2241.3 1448.6 L2238.6 1449.2 L2236 1450.3 L2233.4 1451.9 L2231.1 1454 L2229.2 1456.4 L2227.8 1459 L2226.9 1461.6 L2226.6 1464.1 L2227 1466.4 L2228 1468.4 L2229.5 1469.9 L2231.5 1470.8 L2233.8 1471.2 L2236.4 1470.9 L2239.1 1470 L2241.8 1468.6 L2244.2 1466.7 L2246.3 1464.5 M2237.9 1459.6 L2238.5 1460" stroke-width="3.15"/><path d="M546.6 886.9 L553.3 883 M550.5 872.7 L559.2 867.8 L562.2 875.6 L561.9 875.3 L563.2 874.6 L564.8 874.3 L566.7 874.3 L568.7 874.6 L570.6 875.3 L572.4 876.2 L574 877.3 L575.1 878.6 L575.8 879.9 L576 881.1 L575.7 882.2 L574.9 883.1 L573.6 883.8 L572 884.1 L570.1 884.1 L568.1 883.8 L566.1 883.1 M584.4 865.2 L582.1 863.8 L579.6 862.7 L577.1 861.8 L574.7 861.3 L572.6 861.1 L570.9 861.3 L569.6 861.9 L568.8 862.8 L568.6 864 L568.9 865.5 L569.9 867 L571.3 868.7 L573.2 870.3 L575.4 871.8 L577.8 873.1 L580.3 874.2 L582.7 874.9 L585 875.2 L587 875.2 L588.5 874.8 L589.6 874 L590.1 873 L590 871.6 L589.3 870.1 L588.1 868.5 L586.4 866.8 L584.4 865.2 M579.1 868.3 L579.5 868" stroke-width="2.00"/><path d="M428.3 954.6 L435.4 950.5 M459.5 949.1 L440.7 935.3 L445.7 949.6 L456.6 943.3 M468.4 931.7 L466.1 930.2 L463.6 928.9 L461.1 928 L458.7 927.4 L456.5 927.3 L454.7 927.5 L453.3 928.1 L452.4 929.1 L452.1 930.4 L452.4 931.9 L453.3 933.6 L454.7 935.3 L456.5 937 L458.7 938.6 L461.2 940 L463.7 941.1 L466.2 941.9 L468.5 942.2 L470.5 942.2 L472.1 941.8 L473.3 941 L473.8 939.8 L473.8 938.4 L473.2 936.8 L472.1 935.1 L470.4 933.3 L468.4 931.7 M462.8 934.9 L463.2 934.6" stroke-width="2.12"/><path d="M302.8 1026.5 L310.3 1022.1 M318.3 1005 L310.2 1009.5 L317.1 1016.2 L318.5 1017.1 L318.2 1015.4 L318.6 1013.9 L319.7 1012.7 L321.5 1012 L323.7 1011.7 L326.1 1012 L328.6 1012.8 L330.8 1014 L332.7 1015.6 L334 1017.3 L334.5 1019.1 L334.4 1020.7 L333.5 1022 L332 1022.9 L329.9 1023.3 L327.5 1023.2 L325 1022.6 M345.3 1002.1 L343 1000.5 L340.5 999.2 L338 998.2 L335.5 997.6 L333.3 997.4 L331.4 997.7 L330 998.3 L329 999.4 L328.7 1000.7 L328.9 1002.3 L329.7 1004.1 L331 1006 L332.8 1007.8 L335 1009.5 L337.4 1011 L339.9 1012.1 L342.5 1013 L344.8 1013.4 L346.9 1013.3 L348.6 1012.9 L349.8 1012 L350.5 1010.8 L350.5 1009.3 L350 1007.6 L348.9 1005.7 L347.3 1003.9 L345.3 1002.1 M339.4 1005.5 L339.8 1005.3" stroke-width="2.26"/><path d="M169.2 1102.9 L177.3 1098.3 M186.2 1080.7 L185.6 1088.8 L186.8 1094.6 L186 1093 L185.9 1091.4 L186.3 1089.9 L187.3 1088.7 L188.9 1087.9 L190.8 1087.4 L192.9 1087.4 L195.1 1087.9 L197.3 1088.7 L199.2 1089.9 L200.8 1091.4 L201.8 1093 L202.3 1094.7 L202.2 1096.2 L201.4 1097.6 L200.1 1098.6 L198.4 1099.3 L196.4 1099.5 L194.1 1099.2 L191.9 1098.6 L189.8 1097.5 L188.1 1096.2 L186.8 1094.6 M214.5 1077 L212.2 1075.3 L209.7 1073.9 L207.2 1072.9 L204.7 1072.2 L202.4 1072 L200.4 1072.3 L198.9 1073 L197.9 1074.1 L197.4 1075.5 L197.5 1077.2 L198.3 1079.1 L199.5 1081.1 L201.3 1083 L203.4 1084.9 L205.8 1086.4 L208.4 1087.7 L211 1088.5 L213.4 1089 L215.5 1088.9 L217.3 1088.4 L218.6 1087.5 L219.3 1086.2 L219.5 1084.6 L219 1082.8 L218 1080.8 L216.5 1078.9 L214.5 1077 M208.2 1080.6 L208.7 1080.3" stroke-width="2.40"/><path d="M27 1184.4 L35.5 1179.5 M35 1166.3 L46.8 1159.6 L56.4 1181.1 M75.2 1156.7 L72.9 1154.9 L70.5 1153.4 L67.9 1152.3 L65.3 1151.6 L63 1151.4 L61 1151.7 L59.3 1152.4 L58.2 1153.6 L57.7 1155.2 L57.7 1157 L58.3 1159 L59.5 1161.1 L61.2 1163.2 L63.3 1165.1 L65.7 1166.8 L68.3 1168.1 L70.9 1169 L73.4 1169.5 L75.6 1169.5 L77.4 1168.9 L78.8 1168 L79.7 1166.6 L79.9 1164.9 L79.6 1162.9 L78.6 1160.8 L77.1 1158.7 L75.2 1156.7 M68.5 1160.6 L69 1160.3" stroke-width="2.56"/><path d="M-125 1271.3 L-115.8 1266.1 M-100 1249.8 L-101.1 1248.9 L-102.4 1248.2 L-103.9 1247.7 L-105.4 1247.6 L-106.9 1247.6 L-108.3 1248 L-109.5 1248.6 L-110.5 1249.4 L-111.2 1250.4 L-111.6 1251.5 L-111.6 1252.7 L-111.2 1253.9 L-110.5 1255 L-109.5 1256 L-108.3 1256.8 L-106.9 1257.4 L-105.4 1257.7 L-103.9 1257.8 L-102.4 1257.6 L-101.1 1257.1 L-100 1256.4 L-99.1 1255.4 L-98.6 1254.4 L-98.5 1253.2 L-98.6 1252 L-99.2 1250.9 L-100 1249.8 M-90.1 1257.8 L-91.4 1256.7 L-93 1255.9 L-94.7 1255.4 L-96.6 1255.2 L-98.4 1255.4 L-100.2 1255.9 L-101.7 1256.6 L-102.9 1257.6 L-103.8 1258.9 L-104.3 1260.2 L-104.4 1261.7 L-104 1263.1 L-103.2 1264.4 L-102 1265.6 L-100.6 1266.5 L-98.9 1267.2 L-97.1 1267.5 L-95.2 1267.5 L-93.4 1267.2 L-91.7 1266.6 L-90.4 1265.7 L-89.3 1264.6 L-88.6 1263.2 L-88.3 1261.8 L-88.5 1260.4 L-89.1 1259 L-90.1 1257.8 M-73.4 1241.8 L-75.6 1239.9 L-78.1 1238.3 L-80.7 1237.1 L-83.3 1236.4 L-85.7 1236.1 L-87.8 1236.4 L-89.6 1237.2 L-90.8 1238.5 L-91.5 1240.1 L-91.5 1242.1 L-91 1244.2 L-89.9 1246.5 L-88.2 1248.7 L-86.2 1250.8 L-83.8 1252.5 L-81.2 1254 L-78.6 1254.9 L-76.1 1255.4 L-73.8 1255.4 L-71.8 1254.8 L-70.3 1253.8 L-69.4 1252.3 L-69 1250.5 L-69.3 1248.4 L-70.1 1246.2 L-71.5 1243.9 L-73.4 1241.8 M-80.6 1245.9 L-80 1245.6" stroke-width="2.74"/><path d="M-287.5 1364.4 L-277.7 1358.8 M-257.6 1342.1 L-259.1 1340.8 L-260.8 1339.8 L-262.7 1339.1 L-264.7 1338.8 L-266.7 1338.8 L-268.6 1339.3 L-270.2 1340.1 L-271.5 1341.2 L-272.5 1342.6 L-273 1344.2 L-273 1345.8 L-272.6 1347.5 L-271.7 1349.1 L-270.4 1350.5 L-268.8 1351.6 L-267 1352.5 L-265 1353 L-263 1353.1 L-261 1352.9 L-259.3 1352.2 L-257.8 1351.3 L-256.6 1350 L-255.9 1348.5 L-255.7 1346.9 L-255.9 1345.2 L-256.5 1343.6 L-257.6 1342.1 M-257.6 1342.1 L-256.4 1361.1 M-232.3 1332.8 L-234.5 1330.7 L-237 1329 L-239.6 1327.7 L-242.2 1327 L-244.7 1326.7 L-246.9 1327 L-248.7 1327.9 L-250.1 1329.2 L-250.9 1331 L-251.1 1333.1 L-250.7 1335.4 L-249.7 1337.8 L-248.1 1340.2 L-246.1 1342.4 L-243.8 1344.3 L-241.2 1345.8 L-238.5 1346.8 L-235.9 1347.4 L-233.6 1347.3 L-231.5 1346.7 L-229.9 1345.6 L-228.8 1344 L-228.3 1342.1 L-228.5 1339.8 L-229.2 1337.5 L-230.5 1335.1 L-232.3 1332.8 M-240 1337.2 L-239.4 1336.9" stroke-width="2.93"/><path d="M-472.1 1470 L-461.5 1464 M-453.5 1450.4 L-451.2 1443.1 L-434.6 1463.7 M-415.7 1437.8 L-417.9 1435.6 L-420.3 1433.7 L-422.9 1432.3 L-425.6 1431.5 L-428.2 1431.2 L-430.5 1431.6 L-432.5 1432.5 L-433.9 1433.9 L-434.9 1435.8 L-435.2 1438.1 L-435 1440.6 L-434.1 1443.2 L-432.7 1445.7 L-430.7 1448.1 L-428.4 1450.2 L-425.9 1451.8 L-423.2 1453 L-420.5 1453.5 L-418 1453.5 L-415.9 1452.8 L-414.1 1451.6 L-412.9 1449.9 L-412.3 1447.8 L-412.2 1445.4 L-412.8 1442.8 L-414 1440.3 L-415.7 1437.8 M-424 1442.5 L-423.4 1442.2 M-392.8 1424.6 L-394.9 1422.5 L-397.4 1420.6 L-400 1419.3 L-402.7 1418.4 L-405.2 1418.2 L-407.5 1418.5 L-409.5 1419.4 L-410.9 1420.8 L-411.9 1422.7 L-412.2 1425 L-411.9 1427.4 L-411 1430 L-409.6 1432.5 L-407.6 1434.9 L-405.3 1436.9 L-402.7 1438.6 L-400.1 1439.7 L-397.4 1440.2 L-394.9 1440.2 L-392.8 1439.6 L-391.1 1438.4 L-389.9 1436.7 L-389.2 1434.6 L-389.2 1432.2 L-389.9 1429.7 L-391.1 1427.1 L-392.8 1424.6 M-401 1429.4 L-400.4 1429" stroke-width="3.15"/></g>
<g fill="none" stroke-width="1.2">
<line x1="268" y1="1161" x2="268" y2="1048" stroke="#0000ff"/>
<line x1="268" y1="1161" x2="424" y2="1072" stroke="#00e000"/>
<line x1="268" y1="1161" x2="424" y2="1251" stroke="#e00000"/>
</g>
    </svg>
  </div>
  <div id="side">
    <div class="bar"></div>
    <div class="btn" style="top:59px;">Load .py...</div>
    <div class="btn" style="top:123px;">Reload</div>
    <div class="btn" style="top:187px;">Export...</div>
    <div class="btn" style="top:251px;">Frame</div>
    <div class="btn" style="top:315px;">XYZ</div>
    <div class="btn" style="top:379px;">X</div>
    <div class="btn" style="top:443px;">Y</div>
    <div class="btn" style="top:507px;">Z</div>
    <div class="chk" style="top:573px;"></div><div class="lbl" style="top:572px;">Grid</div>
    <div class="rad on" style="top:629px;"></div><div class="lbl" style="top:628px;">Perspective</div>
    <div class="rad" style="top:685px;"></div><div class="lbl" style="top:684px;">Orthogonal</div>
    <div class="chk on" style="top:741px;"><svg width="28" height="28"><path d="M6.5 14.5 L11.5 20.5 L21.5 7" fill="none" stroke="#e8eefa" stroke-width="3.6" stroke-linecap="round" stroke-linejoin="round"/></svg></div><div class="lbl" style="top:740px;">Axes</div>
    <div class="chk" style="top:797px;"></div><div class="lbl" style="top:796px;">Edges</div>
    <div class="chk on" style="top:853px;"><svg width="28" height="28"><path d="M6.5 14.5 L11.5 20.5 L21.5 7" fill="none" stroke="#e8eefa" stroke-width="3.6" stroke-linecap="round" stroke-linejoin="round"/></svg></div><div class="lbl" style="top:852px;">Gnomon</div>
  </div>
  <div id="border"></div>
</div>
</body></html>
